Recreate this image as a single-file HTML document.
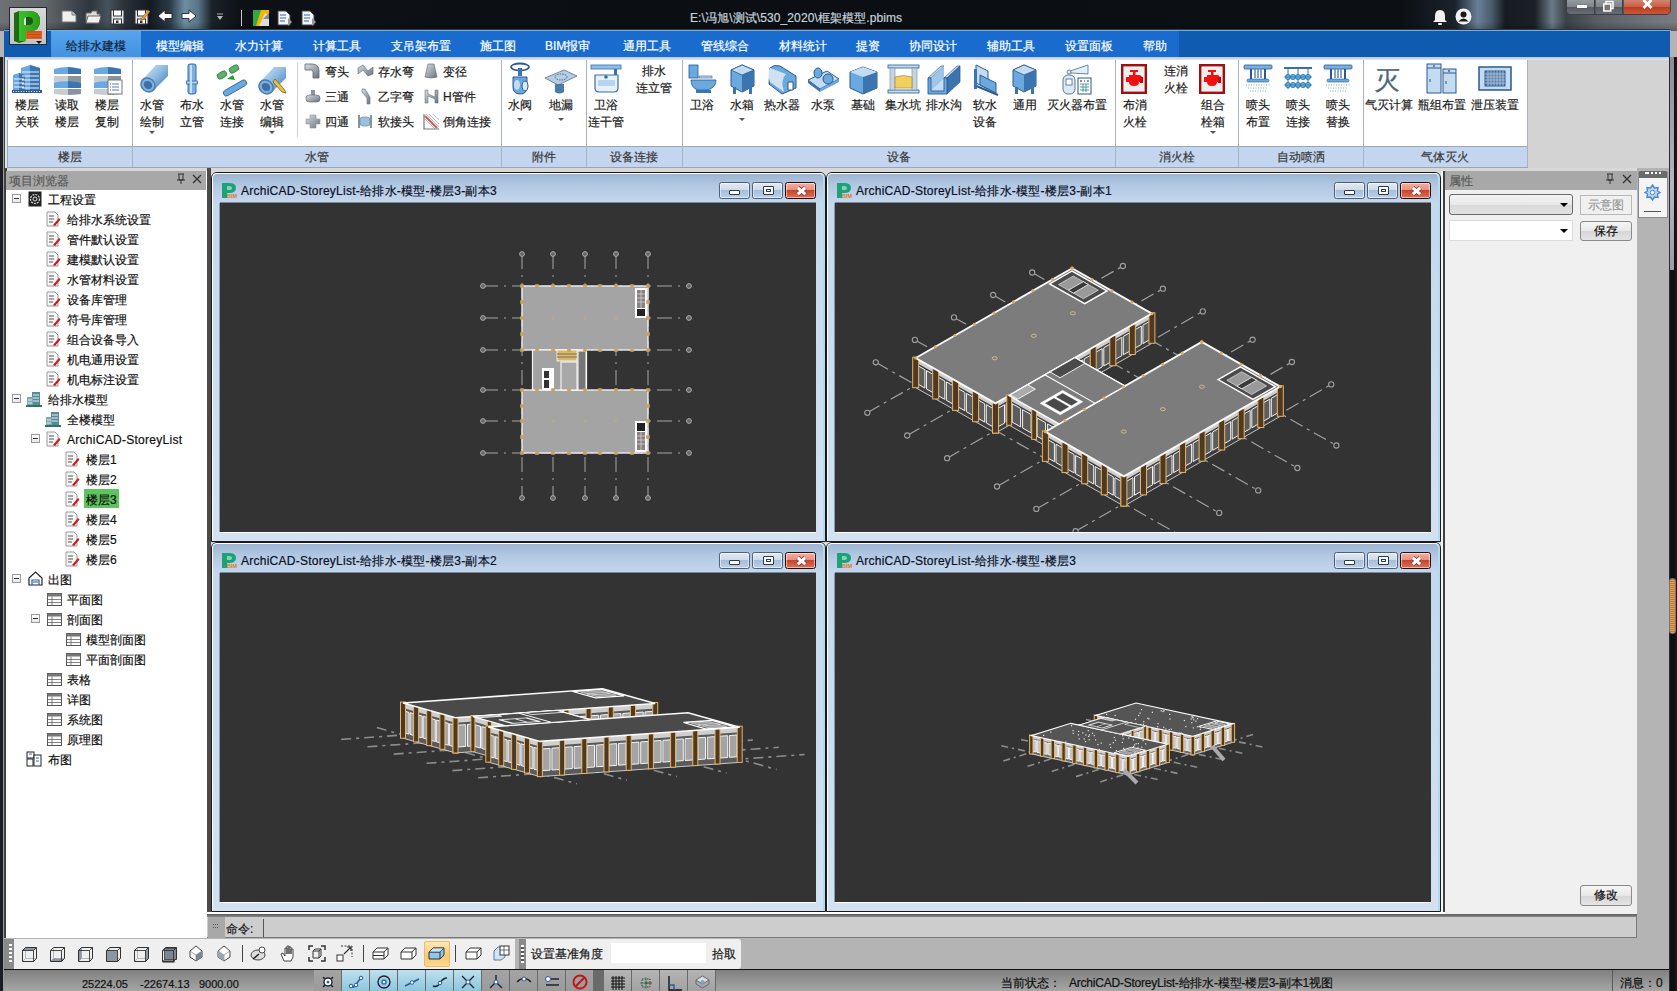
<!DOCTYPE html><html><head><meta charset="utf-8"><style>
*{margin:0;padding:0;box-sizing:border-box}
html,body{width:1677px;height:991px;overflow:hidden;background:#b4b4b4}
body{position:relative;font-family:"Liberation Sans",sans-serif;font-size:12px;color:#1a1a1a;-webkit-text-stroke:0.2px currentColor}
.a{position:absolute}
.t{position:absolute;white-space:nowrap;line-height:14px;margin-top:1px}
.c{position:absolute;white-space:nowrap;line-height:14px;text-align:center;width:80px;margin-top:1px}
svg{position:absolute;overflow:visible}
.tab{position:absolute;top:0;height:26px;line-height:26px;margin-top:1.5px;color:#fff;font-size:12px;white-space:nowrap}
.glab{position:absolute;top:89px;height:21px;background:#c4d6ef;border-top:1px solid #a2aebb;text-align:center;line-height:20px;color:#3a3a3a}
.gsep{position:absolute;top:3px;width:1px;height:107px;background:#b5b5b5}
.ph{position:absolute;left:0;top:0;right:0;height:19px;background:#a8a8a8;color:#5c5c5c;font-size:12px;line-height:19px;padding-left:3px}
.win{position:absolute;width:615px;height:370px;background:linear-gradient(180deg,#9cb4d2 0,#b4cae4 14px,#c4d8ee 30px,#d2e2f2 100%);border:1px solid #1a1a1a;border-radius:6px 6px 0 0;box-shadow:inset -2px 0 0 #b4daf2}
.win:before{content:"";position:absolute;left:0;top:0;right:0;bottom:0;border-top:1px solid #fff;border-left:1px solid #fff;border-radius:5px 5px 0 0}
.vp{position:absolute;left:8px;top:30px;width:596px;height:329px;background:#333;overflow:hidden;box-shadow:0 1px 0 #fff,-1px 0 0 #8d9aa8,0 -1px 0 #7a8796}
.wt{position:absolute;left:29px;top:11px;font-size:12px;line-height:14px;color:#0c1024;white-space:nowrap;letter-spacing:0.25px}
.wb{position:absolute;top:9px;width:31px;height:17px;border:1px solid #50607a;border-radius:2.5px;background:linear-gradient(180deg,#e2eaf4 0,#cfdbea 45%,#a6bedb 50%,#bcd2ea 100%);box-shadow:inset 0 0 0 1px rgba(255,255,255,.5)}
.wb.x{border-color:#2a0c0c;background:linear-gradient(180deg,#f2b0a0 0,#e89080 45%,#c8442a 50%,#dc7258 100%)}
.tr{position:absolute;height:18px;line-height:18px;margin-top:1px;white-space:nowrap;font-size:12px;color:#111}
.ex{position:absolute;width:9px;height:9px;border:1px solid #9a9a9a;background:linear-gradient(180deg,#fff,#e8e8e8)}
.ex:after{content:"";position:absolute;left:1px;top:3px;width:5px;height:1px;background:#333}
.sb{position:absolute;top:0;height:21px;width:28px;border-right:1px solid #6c6c6c}
.lt{letter-spacing:0.28px}
.btn{position:absolute;border:1px solid #8a8a8a;border-radius:3px;background:linear-gradient(180deg,#f6f6f6 0,#e8e8e8 50%,#d6d6d6 51%,#e4e4e4 100%);text-align:center;line-height:18px;color:#111}
</style></head><body><div class="a" style="left:0;top:0;width:1677px;height:31px;background:linear-gradient(90deg,#6e7174 0,#62676b 45px,#3e454c 75px,#2e353c 90px,#46525c 108px,#2a3138 125px,#141a20 150px,#2a3a46 170px,#6e8ea4 185px,#5a7688 198px,#1a2228 212px,#0d1116 240px,#0b0e12 700px,#0c1014 1400px,#1a2229 1455px,#6a8098 1478px,#4a5a68 1492px,#161c22 1505px,#1a2026 1535px,#6a7a86 1552px,#3a4248 1566px,#5a6066 1600px,#6a7076 1640px,#7a7e82 1677px)"></div><div class="a" style="left:0;top:22px;width:1677px;height:9px;background:linear-gradient(180deg,rgba(0,0,0,0),rgba(0,0,0,.25))"></div><svg class="a" style="left:61px;top:10px" width="16" height="13" viewBox="0 0 16 13" ><path d="M1 1 H11 L15 5 V12 H1 Z" fill="#f0f0f0" stroke="#777" stroke-width="1"/><path d="M11 1 V5 H15" fill="#ccc" stroke="#777"/></svg><svg class="a" style="left:85px;top:10px" width="17" height="14" viewBox="0 0 17 14" ><path d="M1 3 H6 L7 1 H12 V4 H15 L13 13 H1 Z" fill="#dcdcdc" stroke="#666"/><path d="M3 6 H16 L14 13 H1 Z" fill="#f2f2f2" stroke="#666"/></svg><svg class="a" style="left:110px;top:9px" width="15" height="16" viewBox="0 0 15 16" ><path d="M1 1 H14 V15 H1 Z" fill="#e4e8ec" stroke="#333"/><rect x="3.5" y="1" width="8" height="6" fill="#fff" stroke="#333"/><rect x="3.5" y="10" width="8" height="5" fill="#fff" stroke="#333"/><rect x="6" y="11.5" width="2.5" height="2.5" fill="#333"/></svg><svg class="a" style="left:134px;top:9px" width="16" height="16" viewBox="0 0 16 16" ><path d="M1 1 H14 V15 H1 Z" fill="#e4e8ec" stroke="#333"/><rect x="3.5" y="1" width="8" height="6" fill="#fff" stroke="#333"/><rect x="3.5" y="10" width="8" height="5" fill="#fff" stroke="#333"/><rect x="6" y="11.5" width="2.5" height="2.5" fill="#333"/><path d="M7 10 L14 1 L16 2.5 L9 11 Z" fill="#f0a030" stroke="#8a5010" stroke-width=".5"/></svg><svg class="a" style="left:157px;top:9px" width="16" height="15" viewBox="0 0 16 15" ><path d="M1 7 L8 1 V4.5 H15 V9.5 H8 V13 Z" fill="#fff" stroke="#222" stroke-width=".9"/></svg><svg class="a" style="left:181px;top:9px" width="16" height="15" viewBox="0 0 16 15" ><path d="M15 7 L8 1 V4.5 H1 V9.5 H8 V13 Z" fill="#fff" stroke="#222" stroke-width=".9"/></svg><svg class="a" style="left:216px;top:13px" width="8" height="8" viewBox="0 0 8 8" ><path d="M1 1 H7" stroke="#aaa"/><path d="M1 3 L4 7 L7 3 Z" fill="#bbb"/></svg><div class="a" style="left:241px;top:10px;width:1px;height:16px;background:#c8c8c8"></div><svg class="a" style="left:253px;top:10px" width="16" height="16" viewBox="0 0 16 16" ><rect x="0" y="0" width="16" height="16" fill="#f4b400"/><path d="M0 0 H8 L3 16 H0 Z" fill="#2ea84a"/><path d="M6 16 L12 3 L16 6 V16 Z" fill="#ddd"/><path d="M10 9 L16 3 V9 Z" fill="#888"/></svg><svg class="a" style="left:277px;top:10px" width="16" height="16" viewBox="0 0 16 16" ><path d="M1 1 H9 L13 5 V15 H1 Z" fill="#f4f4f4" stroke="#444"/><path d="M3 5 H9 M3 8 H9 M3 11 H8" stroke="#2a6ab0" stroke-width="1.2"/><path d="M11 8 L15 12 L11 16 Z" fill="#999"/></svg><svg class="a" style="left:301px;top:10px" width="16" height="16" viewBox="0 0 16 16" ><path d="M1 1 H9 L13 5 V15 H1 Z" fill="#f4f4f4" stroke="#444"/><path d="M3 5 H9 M3 8 H9 M3 11 H8" stroke="#2a6ab0" stroke-width="1.2"/><path d="M11 8 L15 12 L11 16 Z" fill="#999"/></svg><div class="t" style="left:690px;top:9.5px;color:#c6d2de;letter-spacing:0.1px">E:\冯旭\测试\530_2020\框架模型.pbims</div><svg class="a" style="left:1433px;top:9px" width="14" height="16" viewBox="0 0 14 16" ><path d="M7 1 Q12 1 12 7 V11 L14 13 H0 L2 11 V7 Q2 1 7 1 Z" fill="#f2f2f2"/><rect x="5" y="14" width="4" height="2" rx="1" fill="#f2f2f2"/></svg><svg class="a" style="left:1455px;top:8px" width="17" height="17" viewBox="0 0 17 17" ><circle cx="8.5" cy="8.5" r="8" fill="#f2f2f2"/><circle cx="8.5" cy="6.5" r="3" fill="#1a1a1a"/><path d="M3.5 13.5 Q8.5 7.5 13.5 13.5 Z" fill="#1a1a1a"/></svg><div class="a" style="left:1566px;top:-3px;width:105px;height:18px;border:1px solid #39424a;border-radius:0 0 5px 5px;overflow:hidden;background:#555"><div class="a" style="left:0;top:0;width:28px;height:17px;background:linear-gradient(180deg,#9aa0a6 0,#7e858c 50%,#545a60 51%,#6a7076 100%);border-right:1px solid #39424a"></div><div class="a" style="left:29px;top:0;width:27px;height:17px;background:linear-gradient(180deg,#9aa0a6 0,#7e858c 50%,#545a60 51%,#6a7076 100%);border-right:1px solid #39424a"></div><div class="a" style="left:57px;top:0;width:47px;height:17px;background:linear-gradient(180deg,#d89080 0,#c86048 50%,#b83a20 51%,#d05a3a 100%)"></div></div><div class="a" style="left:1577px;top:5px;width:10px;height:3px;background:#fff;box-shadow:0 0 1px #333"></div><svg class="a" style="left:1603px;top:1px" width="11" height="11" viewBox="0 0 11 11" ><rect x="3" y="0.5" width="7" height="7" fill="none" stroke="#fff" stroke-width="1.5"/><rect x="0.8" y="3" width="7" height="7" fill="#777" stroke="#fff" stroke-width="1.5"/></svg><svg class="a" style="left:1641px;top:-1px" width="13" height="11" viewBox="0 0 13 11" ><path d="M2.5 1 L10.5 9 M10.5 1 L2.5 9" stroke="#fff" stroke-width="2.8"/></svg><div class="a" style="left:4px;top:29px;width:1667px;height:2px;background:linear-gradient(180deg,#2a3848 0,#2a3848 1px,#7aa8d8 1px);border-radius:4px 4px 0 0"></div><div class="a" style="left:4px;top:31px;width:1666px;height:26px;background:#0e5bb0"></div><div class="a" style="left:51px;top:31px;width:1128px;height:26px;background:#196cce"></div><div class="a" style="left:51px;top:31px;width:90px;height:26px;background:linear-gradient(180deg,#56a4ec,#4292e0)"></div><div class="tab" style="left:66px;top:31px;color:#14243c">给排水建模</div><div class="tab" style="left:156px;top:31px">模型编辑</div><div class="tab" style="left:235px;top:31px">水力计算</div><div class="tab" style="left:313px;top:31px">计算工具</div><div class="tab" style="left:391px;top:31px">支吊架布置</div><div class="tab" style="left:480px;top:31px">施工图</div><div class="tab" style="left:545px;top:31px">BIM报审</div><div class="tab" style="left:623px;top:31px">通用工具</div><div class="tab" style="left:701px;top:31px">管线综合</div><div class="tab" style="left:779px;top:31px">材料统计</div><div class="tab" style="left:856px;top:31px">提资</div><div class="tab" style="left:909px;top:31px">协同设计</div><div class="tab" style="left:987px;top:31px">辅助工具</div><div class="tab" style="left:1065px;top:31px">设置面板</div><div class="tab" style="left:1143px;top:31px">帮助</div><div class="a" style="left:9px;top:7px;width:38px;height:38px;background:linear-gradient(180deg,#d8d8d8,#c4c4c4);border:1px solid #1e2a36"></div><svg class="a" style="left:10px;top:8px" width="36" height="36" viewBox="0 0 36 36" ><defs><linearGradient id="lg1" x1="0" y1="0" x2="1" y2="0"><stop offset="0" stop-color="#3cc02a"/><stop offset="1" stop-color="#2a9a1c"/></linearGradient></defs><path d="M4 5 L9 3 H20 Q30 3 30 13 Q30 23 20 23 H16 V33 L9 35 L4 33 Z" fill="#1f6a14"/><path d="M9 3 H20 Q30 3 30 13 Q30 23 20 23 H16 V33 H9 Z" fill="url(#lg1)"/><path d="M16 9 H19 Q23 9 23 13 Q23 17 19 17 H16 Z" fill="#1a5a12"/><path d="M16 9 L14 11 V17 H16 Z" fill="#d8ecd0"/><rect x="16" y="23" width="16" height="8" fill="#e0621c"/><path d="M17 24 H31 M17 26.5 H31 M17 29 H31" stroke="#b84810" stroke-width=".8"/><path d="M26 33 L32 33 L29 36 Z" fill="#111"/></svg><div class="a" style="left:4px;top:57px;width:1666px;height:111px;background:#d3d3d3"></div><div class="a" style="left:4px;top:57px;width:1666px;height:3px;background:linear-gradient(180deg,#b6c6d8,#dfe8f2)"></div><div class="a" style="left:4px;top:57px;width:4px;height:111px;background:linear-gradient(90deg,#2a3440 0,#2a3440 1px,#dde4ec 1px)"></div><div class="a" style="left:8px;top:60px;width:1520px;height:87px;background:#fff"></div><div class="a" style="left:7px;top:146px;width:1521px;height:22px;background:#c4d6ef;border:1px solid #9aa6b4"></div><div class="a" style="left:7px;top:60px;width:1px;height:87px;background:#9aa6b4"></div><div class="a" style="left:132px;top:60px;width:1px;height:107px;background:#aab2ba"></div><div class="a" style="left:501px;top:60px;width:1px;height:107px;background:#aab2ba"></div><div class="a" style="left:586px;top:60px;width:1px;height:107px;background:#aab2ba"></div><div class="a" style="left:682px;top:60px;width:1px;height:107px;background:#aab2ba"></div><div class="a" style="left:1115px;top:60px;width:1px;height:107px;background:#aab2ba"></div><div class="a" style="left:1238px;top:60px;width:1px;height:107px;background:#aab2ba"></div><div class="a" style="left:1363px;top:60px;width:1px;height:107px;background:#aab2ba"></div><div class="a" style="left:1527px;top:60px;width:1px;height:107px;background:#aab2ba"></div><div class="a" style="left:1670px;top:57px;width:7px;height:111px;background:#6a6e72"></div><div class="t" style="left:8px;width:124px;top:149px;text-align:center;color:#383838">楼层</div><div class="t" style="left:132px;width:369px;top:149px;text-align:center;color:#383838">水管</div><div class="t" style="left:501px;width:85px;top:149px;text-align:center;color:#383838">附件</div><div class="t" style="left:586px;width:96px;top:149px;text-align:center;color:#383838">设备连接</div><div class="t" style="left:682px;width:433px;top:149px;text-align:center;color:#383838">设备</div><div class="t" style="left:1115px;width:123px;top:149px;text-align:center;color:#383838">消火栓</div><div class="t" style="left:1238px;width:125px;top:149px;text-align:center;color:#383838">自动喷洒</div><div class="t" style="left:1363px;width:164px;top:149px;text-align:center;color:#383838">气体灭火</div><div class="c" style="left:-13px;top:97px">楼层</div><div class="c" style="left:-13px;top:114px">关联</div><div class="c" style="left:27px;top:97px">读取</div><div class="c" style="left:27px;top:114px">楼层</div><div class="c" style="left:67px;top:97px">楼层</div><div class="c" style="left:67px;top:114px">复制</div><div class="c" style="left:112px;top:97px">水管</div><div class="c" style="left:112px;top:114px">绘制</div><div class="c" style="left:152px;top:97px">布水</div><div class="c" style="left:152px;top:114px">立管</div><div class="c" style="left:192px;top:97px">水管</div><div class="c" style="left:192px;top:114px">连接</div><div class="c" style="left:232px;top:97px">水管</div><div class="c" style="left:232px;top:114px">编辑</div><div class="c" style="left:566px;top:97px">卫浴</div><div class="c" style="left:566px;top:114px">连干管</div><div class="c" style="left:945px;top:97px">软水</div><div class="c" style="left:945px;top:114px">设备</div><div class="c" style="left:1095px;top:97px">布消</div><div class="c" style="left:1095px;top:114px">火栓</div><div class="c" style="left:1173px;top:97px">组合</div><div class="c" style="left:1173px;top:114px">栓箱</div><div class="c" style="left:1218px;top:97px">喷头</div><div class="c" style="left:1218px;top:114px">布置</div><div class="c" style="left:1258px;top:97px">喷头</div><div class="c" style="left:1258px;top:114px">连接</div><div class="c" style="left:1298px;top:97px">喷头</div><div class="c" style="left:1298px;top:114px">替换</div><div class="c" style="left:480px;top:97px">水阀</div><div class="c" style="left:521px;top:97px">地漏</div><div class="c" style="left:662px;top:97px">卫浴</div><div class="c" style="left:702px;top:97px">水箱</div><div class="c" style="left:742px;top:97px">热水器</div><div class="c" style="left:783px;top:97px">水泵</div><div class="c" style="left:823px;top:97px">基础</div><div class="c" style="left:863px;top:97px">集水坑</div><div class="c" style="left:904px;top:97px">排水沟</div><div class="c" style="left:985px;top:97px">通用</div><div class="c" style="left:1037px;top:97px">灭火器布置</div><div class="c" style="left:1349px;top:97px">气灭计算</div><div class="c" style="left:1402px;top:97px">瓶组布置</div><div class="c" style="left:1455px;top:97px">泄压装置</div><div class="c" style="left:614px;top:63px">排水</div><div class="c" style="left:614px;top:80px">连立管</div><div class="c" style="left:1136px;top:63px">连消</div><div class="c" style="left:1136px;top:80px">火栓</div><div class="a" style="left:149px;top:131px;width:0;height:0;border-left:3px solid transparent;border-right:3px solid transparent;border-top:3px solid #555"></div><div class="a" style="left:269px;top:131px;width:0;height:0;border-left:3px solid transparent;border-right:3px solid transparent;border-top:3px solid #555"></div><div class="a" style="left:517px;top:118px;width:0;height:0;border-left:3px solid transparent;border-right:3px solid transparent;border-top:3px solid #555"></div><div class="a" style="left:558px;top:118px;width:0;height:0;border-left:3px solid transparent;border-right:3px solid transparent;border-top:3px solid #555"></div><div class="a" style="left:739px;top:118px;width:0;height:0;border-left:3px solid transparent;border-right:3px solid transparent;border-top:3px solid #555"></div><div class="a" style="left:1210px;top:131px;width:0;height:0;border-left:3px solid transparent;border-right:3px solid transparent;border-top:3px solid #555"></div><div class="t" style="left:325px;top:64px">弯头</div><div class="t" style="left:378px;top:64px">存水弯</div><div class="t" style="left:443px;top:64px">变径</div><div class="t" style="left:325px;top:89px">三通</div><div class="t" style="left:378px;top:89px">乙字弯</div><div class="t" style="left:443px;top:89px">H管件</div><div class="t" style="left:325px;top:114px">四通</div><div class="t" style="left:378px;top:114px">软接头</div><div class="t" style="left:443px;top:114px">倒角连接</div><div class="a" style="left:297px;top:63px;width:1px;height:74px;background:#ccc"></div><svg class="a" style="left:12px;top:64px" width="31" height="30" viewBox="0 0 31 30" ><path d="M9 4 L18 1 L28 4 V27 H9 Z" fill="#6aa8e0"/><path d="M18 1 L28 4 V27 H18 Z" fill="#3c74b0"/><path d="M1 11 L7 9 L13 11 V27 H1 Z" fill="#6aa8e0"/><path d="M7 9 L13 11 V27 H7Z" fill="#3c74b0"/><path d="M10 8 H27 M10 12 H27 M10 16 H27 M10 20 H27 M10 24 H27 M2 15 H12 M2 19 H12 M2 23 H12" stroke="#e8f2fb" stroke-width="1.2"/><rect x="0" y="26" width="30" height="3" fill="#2c5a8c"/><path d="M1 27.5 H29" stroke="#fff" stroke-dasharray="1 1.6"/></svg><svg class="a" style="left:53px;top:65px" width="30" height="31" viewBox="0 0 30 31" ><path d="M1 4 Q14 0 28 4 V9 H1 Z" fill="#6aa8e0"/><path d="M15 2 L28 4 V9 H15 Z" fill="#3c74b0"/><path d="M1 11 H28 V17 H1 Z" fill="#c8cdd2"/><path d="M15 11 H28 V17 H15 Z" fill="#8a949e"/><path d="M1 17.5 Q14 15 28 17.5 V23 H1 Z" fill="#6aa8e0"/><path d="M15 16 L28 17.5 V23 H15 Z" fill="#3c74b0"/><path d="M1 24 Q14 22 28 24 V29 Q14 31 1 29 Z" fill="#c8cdd2"/><path d="M15 23 L28 24 V29 L15 30 Z" fill="#8a949e"/><path d="M1 9.5 H28 M1 23.5 H28" stroke="#fff"/></svg><svg class="a" style="left:93px;top:65px" width="30" height="31" viewBox="0 0 30 31" ><path d="M1 4 Q14 0 28 4 V9 H1 Z" fill="#6aa8e0"/><path d="M15 2 L28 4 V9 H15 Z" fill="#3c74b0"/><path d="M1 11 H28 V17 H1 Z" fill="#c8cdd2"/><path d="M15 11 H28 V17 H15 Z" fill="#8a949e"/><path d="M1 17.5 Q14 15 28 17.5 V23 H1 Z" fill="#6aa8e0"/><path d="M15 16 L28 17.5 V23 H15 Z" fill="#3c74b0"/><path d="M1 24 Q14 22 28 24 V29 Q14 31 1 29 Z" fill="#c8cdd2"/><path d="M15 23 L28 24 V29 L15 30 Z" fill="#8a949e"/><path d="M1 9.5 H28 M1 23.5 H28" stroke="#fff"/><rect x="15" y="15" width="14" height="14" fill="#fff" stroke="#777"/><path d="M19 19 H26 M19 22 H26 M19 25 H26" stroke="#5a7cc0" stroke-width="1.2"/><path d="M17.5 19 H18 M17.5 22 H18 M17.5 25 H18" stroke="#2a4a80" stroke-width="1.5"/></svg><svg class="a" style="left:139px;top:63px" width="30" height="30" viewBox="0 0 30 30" ><defs><linearGradient id="pg" x1="0" y1="0" x2="1" y2="1"><stop offset="0" stop-color="#d8e8f6"/><stop offset=".5" stop-color="#8ab8e2"/><stop offset="1" stop-color="#3a6ea8"/></linearGradient></defs><path d="M4 16 L17 2 L29 2 L29 13 L14 28 Z" fill="url(#pg)"/><ellipse cx="9" cy="22" rx="7.5" ry="6.5" transform="rotate(40 9 22)" fill="#7fb0de" stroke="#4a7cb0" stroke-width="1.5"/><ellipse cx="9" cy="22" rx="4.5" ry="3.8" transform="rotate(40 9 22)" fill="#3e6fa6"/></svg><svg class="a" style="left:257px;top:65px" width="30" height="30" viewBox="0 0 30 30" ><path d="M4 16 L17 2 L29 2 L29 13 L14 28 Z" fill="url(#pg)"/><ellipse cx="9" cy="22" rx="7.5" ry="6.5" transform="rotate(40 9 22)" fill="#7fb0de" stroke="#4a7cb0" stroke-width="1.5"/><ellipse cx="9" cy="22" rx="4.5" ry="3.8" transform="rotate(40 9 22)" fill="#3e6fa6"/><path d="M18 14 L27 24 L29 28 L25 27 L16 17 Z" fill="#f2c040" stroke="#7a5a10" stroke-width=".8"/></svg><svg class="a" style="left:186px;top:63px" width="12" height="32" viewBox="0 0 12 32" ><rect x="2" y="1" width="8" height="30" rx="2" fill="#7cb2e2" stroke="#3a6ea8"/><rect x="0.5" y="18" width="11" height="3" fill="#a8ccee" stroke="#3a6ea8" stroke-width=".8"/><rect x="4" y="2" width="2" height="28" fill="#c8e0f6"/></svg><svg class="a" style="left:216px;top:63px" width="33" height="32" viewBox="0 0 33 32" ><rect x="1" y="9" width="10" height="6" rx="3" transform="rotate(-30 6 12)" fill="#5cb06a" stroke="#2a7a3a" stroke-width=".8"/><rect x="13" y="3" width="10" height="6" rx="3" transform="rotate(-30 18 6)" fill="#5cb06a" stroke="#2a7a3a" stroke-width=".8"/><path d="M11 16 L17 12 L19 17 Z" fill="#20a030"/><rect x="6" y="22" width="26" height="6" rx="3" transform="rotate(-30 19 25)" fill="#6aa8e0" stroke="#2c5a8c" stroke-width=".8"/></svg><svg class="a" style="left:509px;top:63px" width="23" height="33" viewBox="0 0 23 33" ><ellipse cx="11" cy="4" rx="9" ry="3.5" fill="none" stroke="#2c5a8c" stroke-width="1.8"/><rect x="9" y="5" width="4" height="8" fill="#3c74b0"/><path d="M4 14 H18 V24 Q18 31 11 31 Q4 31 4 24 Z" fill="#6aa8e0" stroke="#2c5a8c"/><ellipse cx="8" cy="22" rx="3" ry="5" fill="#c4dcf2"/><ellipse cx="16" cy="23" rx="3" ry="5" fill="#d8e8f6" stroke="#2c5a8c"/></svg><svg class="a" style="left:544px;top:68px" width="34" height="28" viewBox="0 0 34 28" ><path d="M1 10 L20 2 L33 8 L14 17 Z" fill="#b8cde0" stroke="#6a8aa8"/><ellipse cx="17" cy="9" rx="6" ry="3" fill="none" stroke="#3a6a98" stroke-dasharray="1.5 1"/><path d="M11 16 H20 V24 H11 Z" fill="#4a7aa8"/><path d="M11 24 Q15.5 27 20 24" fill="#4a7aa8"/></svg><svg class="a" style="left:591px;top:65px" width="31" height="28" viewBox="0 0 31 28" ><rect x="0" y="0" width="30" height="4" fill="#8cc0ea" stroke="#3a6ea8" stroke-width=".8"/><rect x="23" y="4" width="3" height="6" fill="#3a6ea8"/><path d="M4 10 H27 V23 Q27 27 23 27 H8 Q4 27 4 23 Z" fill="#e8f0f8" stroke="#3a6ea8" stroke-width="1.2"/><path d="M7 15 H24 V21 H7 Z" fill="#b8d4ee"/><circle cx="15" cy="12" r="1.8" fill="#3a6ea8"/></svg><svg class="a" style="left:688px;top:64px" width="30" height="30" viewBox="0 0 30 30" ><rect x="1" y="1" width="9" height="13" fill="#6aa8e0" stroke="#2c5a8c" stroke-width=".8"/><rect x="11" y="12" width="13" height="2" fill="#c4dcf2" stroke="#2c5a8c" stroke-width=".6"/><path d="M3 16 H28 Q28 24 19 26 H10 Q3 24 3 16 Z" fill="#6aa8e0" stroke="#2c5a8c" stroke-width=".8"/><rect x="8" y="26" width="15" height="3" fill="#3c74b0"/></svg><svg class="a" style="left:730px;top:64px" width="26" height="31" viewBox="0 0 26 31" ><path d="M1 6 L12 1 L24 6 V22 L12 28 L1 22 Z" fill="#6aa8e0" stroke="#2c5a8c" stroke-width="1"/><path d="M12 11 L24 6 V22 L12 28 Z" fill="#3c74b0"/><path d="M1 6 L12 11 L24 6 L12 1 Z" fill="#c4dcf2" stroke="#2c5a8c" stroke-width=".8"/><rect x="3" y="23" width="3" height="7" fill="#3c74b0"/><rect x="19" y="23" width="3" height="7" fill="#3c74b0"/></svg><svg class="a" style="left:766px;top:64px" width="33" height="31" viewBox="0 0 33 31" ><path d="M4 4 Q8 0 14 2 L30 12 V24 L16 30 L3 20 Z" fill="#6aa8e0" stroke="#2c5a8c"/><path d="M4 4 Q1 10 4 18 L18 28 Q14 16 20 10 Z" fill="#d0e2f2"/><path d="M22 18 H27 V26 H22 Z" fill="#fff" stroke="#2c5a8c"/></svg><svg class="a" style="left:807px;top:67px" width="33" height="28" viewBox="0 0 33 28" ><path d="M1 13 L20 4 L32 12 L13 22 Z" fill="#c4dcf2" stroke="#2c5a8c"/><path d="M1 13 V16 L13 25 V22 Z" fill="#3c74b0"/><path d="M13 22 V25 L32 15 V12 Z" fill="#6aa8e0"/><ellipse cx="11" cy="6" rx="4" ry="5" fill="#6aa8e0" stroke="#2c5a8c"/><ellipse cx="21" cy="12" rx="5" ry="5" fill="#6aa8e0" stroke="#2c5a8c"/></svg><svg class="a" style="left:849px;top:66px" width="29" height="29" viewBox="0 0 29 29" ><path d="M1 6 L14 1 L28 6 V22 L14 28 L1 22 Z" fill="#6aa8e0" stroke="#2c5a8c"/><path d="M14 11 L28 6 V22 L14 28 Z" fill="#3c74b0"/><path d="M1 6 L14 11 L28 6 L14 1 Z" fill="#c4dcf2"/></svg><svg class="a" style="left:887px;top:64px" width="33" height="31" viewBox="0 0 33 31" ><rect x="1" y="1" width="31" height="3" fill="#c4dcf2" stroke="#2c5a8c" stroke-width=".8"/><rect x="1" y="26" width="31" height="3" fill="#c4dcf2" stroke="#2c5a8c" stroke-width=".8"/><rect x="3" y="4" width="5" height="22" fill="#c8d4e0" stroke="#6a8aa8" stroke-width=".6"/><rect x="25" y="4" width="5" height="22" fill="#c8d4e0" stroke="#6a8aa8" stroke-width=".6"/><path d="M8 13 Q16 10 25 13 V24 H8 Z" fill="#f2d060" stroke="#9a7a20" stroke-width=".6"/></svg><svg class="a" style="left:927px;top:64px" width="34" height="31" viewBox="0 0 34 31" ><path d="M1 14 L14 2 L17 2 L4 14 Z" fill="#c4dcf2" stroke="#2c5a8c" stroke-width=".7"/><path d="M4 14 L17 2 V15 L4 27 Z" fill="#9ec6ea"/><path d="M4 27 L17 15 H30 L17 27 Z" fill="#c4dcf2"/><path d="M17 14 L30 2 H33 L20 14 Z" fill="#c4dcf2" stroke="#2c5a8c" stroke-width=".7"/><path d="M20 14 L33 2 V18 L20 30 Z" fill="#3c74b0" stroke="#2c5a8c" stroke-width=".7"/><path d="M1 14 H4 V27 H17 V14 H20 V30 H1 Z" fill="#6aa8e0" stroke="#2c5a8c" stroke-width=".9"/></svg><svg class="a" style="left:972px;top:63px" width="27" height="33" viewBox="0 0 27 33" ><path d="M4 2 L16 8 V26 L4 20 Z" fill="#c4dcf2" stroke="#2c5a8c"/><path d="M8 12 L24 20 V30 L8 22 Z" fill="#6aa8e0" stroke="#2c5a8c"/><path d="M2 22 L26 32" stroke="#2c5a8c" stroke-width="2"/><rect x="2" y="6" width="3" height="20" fill="#3c74b0"/></svg><svg class="a" style="left:1012px;top:64px" width="27" height="31" viewBox="0 0 27 31" ><path d="M1 6 L12 1 L24 6 V22 L12 28 L1 22 Z" fill="#6aa8e0" stroke="#2c5a8c" stroke-width="1"/><path d="M12 11 L24 6 V22 L12 28 Z" fill="#3c74b0"/><path d="M1 6 L12 11 L24 6 L12 1 Z" fill="#c4dcf2" stroke="#2c5a8c" stroke-width=".8"/><rect x="3" y="23" width="3" height="7" fill="#3c74b0"/><rect x="19" y="23" width="3" height="7" fill="#3c74b0"/></svg><svg class="a" style="left:1061px;top:63px" width="33" height="33" viewBox="0 0 33 33" ><path d="M9 8 L27 2 V11 L10 10 Z" fill="#e4eef6" stroke="#5a7a98" stroke-width=".9"/><circle cx="8" cy="9" r="2" fill="#dce8f2" stroke="#5a7a98" stroke-width=".9"/><rect x="2" y="12" width="12" height="19" rx="5" fill="#dce8f2" stroke="#5a7a98" stroke-width="1"/><rect x="5" y="16" width="6" height="6" fill="#fff" stroke="#5a7a98" stroke-width=".9"/><rect x="17" y="15" width="13" height="16" fill="#fff" stroke="#2a5a7a" stroke-width="1"/><circle cx="20" cy="18" r=".9" fill="#d02020"/><circle cx="23.5" cy="18" r=".7" fill="#555"/><circle cx="27" cy="18" r=".9" fill="#20a040"/><path d="M19 21 H28 M19 24 H28 M19 27 H28 M22 21 V29 M25 21 V29" stroke="#2a8a7a" stroke-width=".8"/></svg><svg class="a" style="left:1121px;top:64px" width="27" height="31" viewBox="0 0 27 31" ><rect x="1.2" y="1.2" width="23.6" height="27.6" fill="#f2eeee" stroke="#a01010" stroke-width="2.4"/><rect x="9" y="6" width="8" height="2" fill="#f01010"/><rect x="12" y="8" width="2.5" height="3" fill="#f01010"/><path d="M8 11 H18 Q21 11 21 15 V18 H18 Q18 22 13 22 Q8 22 8 18 H5 V13 H8 Z" fill="#f01010"/><rect x="19" y="13" width="3" height="6" fill="#c80808"/></svg><svg class="a" style="left:1199px;top:64px" width="27" height="31" viewBox="0 0 27 31" ><rect x="1.2" y="1.2" width="23.6" height="27.6" fill="#f2eeee" stroke="#a01010" stroke-width="2.4"/><rect x="9" y="6" width="8" height="2" fill="#f01010"/><rect x="12" y="8" width="2.5" height="3" fill="#f01010"/><path d="M8 11 H18 Q21 11 21 15 V18 H18 Q18 22 13 22 Q8 22 8 18 H5 V13 H8 Z" fill="#f01010"/><rect x="19" y="13" width="3" height="6" fill="#c80808"/></svg><svg class="a" style="left:1243px;top:64px" width="30" height="30" viewBox="0 0 30 30" ><rect x="1" y="1" width="28" height="4" rx="1" fill="#7ab0e0" stroke="#2c5a8c" stroke-width=".8"/><path d="M8 5 V16 H22 V5" fill="none" stroke="#2c5a8c" stroke-width="2"/><path d="M12 5 V14 M15 5 V14 M18 5 V14" stroke="#5a8ab8" stroke-width="1.5"/><rect x="4" y="15" width="22" height="3" rx="1.5" fill="#6aa8e0" stroke="#2c5a8c" stroke-width=".6"/><path d="M3 21 H27 M5 24 H25 M7 27 H23" stroke="#7aa8d4" stroke-dasharray="1 1.5"/></svg><svg class="a" style="left:1323px;top:64px" width="30" height="30" viewBox="0 0 30 30" ><rect x="1" y="1" width="28" height="4" rx="1" fill="#7ab0e0" stroke="#2c5a8c" stroke-width=".8"/><path d="M8 5 V16 H22 V5" fill="none" stroke="#2c5a8c" stroke-width="2"/><path d="M12 5 V14 M15 5 V14 M18 5 V14" stroke="#5a8ab8" stroke-width="1.5"/><rect x="4" y="15" width="22" height="3" rx="1.5" fill="#6aa8e0" stroke="#2c5a8c" stroke-width=".6"/><path d="M3 21 H27 M5 24 H25 M7 27 H23" stroke="#7aa8d4" stroke-dasharray="1 1.5"/></svg><svg class="a" style="left:1283px;top:67px" width="30" height="24" viewBox="0 0 30 24" ><rect x="1" y="0" width="28" height="2" fill="#3a6ea8"/><path d="M5 2 V22 M15 2 V22 M25 2 V22" stroke="#3a6ea8"/><circle cx="5" cy="10" r="2.6" fill="#5ab8e8" stroke="#2a6aa8" stroke-width=".8"/><circle cx="5" cy="18" r="2.6" fill="#5ab8e8" stroke="#2a6aa8" stroke-width=".8"/><circle cx="10" cy="10" r="2.6" fill="#5ab8e8" stroke="#2a6aa8" stroke-width=".8"/><circle cx="10" cy="18" r="2.6" fill="#5ab8e8" stroke="#2a6aa8" stroke-width=".8"/><circle cx="15" cy="10" r="2.6" fill="#5ab8e8" stroke="#2a6aa8" stroke-width=".8"/><circle cx="15" cy="18" r="2.6" fill="#5ab8e8" stroke="#2a6aa8" stroke-width=".8"/><circle cx="20" cy="10" r="2.6" fill="#5ab8e8" stroke="#2a6aa8" stroke-width=".8"/><circle cx="20" cy="18" r="2.6" fill="#5ab8e8" stroke="#2a6aa8" stroke-width=".8"/><circle cx="25" cy="10" r="2.6" fill="#5ab8e8" stroke="#2a6aa8" stroke-width=".8"/><circle cx="25" cy="18" r="2.6" fill="#5ab8e8" stroke="#2a6aa8" stroke-width=".8"/><path d="M1 10 H29 M1 18 H29" stroke="#3a6ea8" stroke-width=".8"/></svg><div class="t" style="left:1374px;top:64px;font-size:26px;line-height:30px;color:#4e667c;-webkit-text-stroke:0.3px #4e667c">灭</div><svg class="a" style="left:1426px;top:63px" width="32" height="31" viewBox="0 0 32 31" ><rect x="1" y="1" width="14" height="29" fill="#c4dcf2" stroke="#2c5a8c"/><rect x="17" y="6" width="13" height="24" fill="#c4dcf2" stroke="#2c5a8c"/><path d="M1 5 H15 M17 10 H30" stroke="#2c5a8c"/><circle cx="8" cy="3" r=".9" fill="#2c5a8c"/><circle cx="23" cy="8" r=".9" fill="#2c5a8c"/><path d="M4 16 V19 M20 18 V21" stroke="#2c5a8c"/></svg><svg class="a" style="left:1478px;top:66px" width="34" height="25" viewBox="0 0 34 25" ><rect x="1" y="1" width="32" height="23" fill="#c4dcf2" stroke="#2c5a8c" stroke-width="1.5"/><rect x="7" y="5" width="20" height="15" fill="#5a7ea8" stroke="#2c5a8c"/><path d="M10 5 V20 M13 5 V20 M16 5 V20 M19 5 V20 M22 5 V20 M25 5 V20 M7 8 H27 M7 11 H27 M7 14 H27 M7 17 H27" stroke="#b8d0e8" stroke-width=".7"/></svg><svg class="a" style="left:304px;top:63px" width="17" height="16" viewBox="0 0 17 16" ><defs><linearGradient id="mg" x1="0" y1="0" x2="1" y2="1"><stop offset="0" stop-color="#d8dde2"/><stop offset="1" stop-color="#6a747e"/></linearGradient></defs><path d="M1 1 H8 Q15 1 15 8 V15 H9 V9 Q9 7 7 7 H1 Z" fill="url(#mg)" stroke="#5a646e" stroke-width=".8"/></svg><svg class="a" style="left:357px;top:64px" width="17" height="13" viewBox="0 0 17 13" ><path d="M1 4 L6 1 L11 7 L16 3 V10 L11 12 L6 6 L1 10 Z" fill="url(#mg)" stroke="#5a646e" stroke-width=".6"/></svg><svg class="a" style="left:424px;top:63px" width="14" height="16" viewBox="0 0 14 16" ><path d="M4 1 H10 L13 14 Q7 16 1 14 Z" fill="url(#mg)" stroke="#5a646e" stroke-width=".6"/></svg><svg class="a" style="left:305px;top:89px" width="16" height="14" viewBox="0 0 16 14" ><rect x="6" y="1" width="4" height="6" fill="#8a949e"/><rect x="1" y="6" width="14" height="7" rx="3" fill="url(#mg)" stroke="#5a646e" stroke-width=".6"/></svg><svg class="a" style="left:360px;top:88px" width="12" height="17" viewBox="0 0 12 17" ><path d="M2 1 L5 1 L10 9 V16 H7 V10 L2 4 Z" fill="url(#mg)" stroke="#6a747e" stroke-width=".6"/></svg><svg class="a" style="left:424px;top:89px" width="15" height="15" viewBox="0 0 15 15" ><path d="M1 1 H4 V5 L11 8 V1 H14 V14 H11 V10 L4 7 V14 H1 Z" fill="url(#mg)" stroke="#5a646e" stroke-width=".5"/></svg><svg class="a" style="left:305px;top:114px" width="16" height="15" viewBox="0 0 16 15" ><path d="M5 1 H11 V5 H15 V10 H11 V14 H5 V10 H1 V5 H5 Z" fill="url(#mg)" stroke="#8a949e" stroke-width=".6"/></svg><svg class="a" style="left:357px;top:114px" width="16" height="15" viewBox="0 0 16 15" ><rect x="1" y="1" width="2" height="13" fill="#8a949e"/><rect x="13" y="1" width="2" height="13" fill="#8a949e"/><rect x="3" y="3" width="10" height="9" rx="3" fill="#9ec0e0" stroke="#5a7a98" stroke-width=".6"/></svg><svg class="a" style="left:423px;top:113px" width="17" height="17" viewBox="0 0 17 17" ><path d="M1 1 V16 H16" fill="none" stroke="#777" stroke-width="1.2"/><path d="M3 1 L16 14 M6 1 L16 11 M10 1 L16 7 M1 5 L12 16" stroke="#999" stroke-width=".7"/><path d="M2 3 L14 15" stroke="#c85a5a" stroke-width="2"/></svg><div class="a" style="left:4px;top:168px;width:1665px;height:3px;background:#d8d8d8"></div><div class="a" style="left:211px;top:168px;width:1230px;height:744px;background:#d8d8d8"></div><div class="win" style="left:211px;top:172px"><svg class="a" style="left:9px;top:9px" width="17" height="17" viewBox="0 0 17 17" ><path d="M1 1 H8 Q15 1 15 6 Q15 11 8 11 H6 V16 H1 Z" fill="#1ea078"/><path d="M6 4 H8 Q11 4 11 6 Q11 8 8 8 H6 Z" fill="#7ad8b0"/><text x="6" y="16" font-size="5.5" font-weight="bold" fill="#e07820" font-family="Liberation Sans">BIM</text></svg><div class="wt">ArchiCAD-StoreyList-给排水-模型-楼层3-副本3</div><div class="wb" style="left:507px"><div class="a" style="left:9px;top:7px;width:11px;height:5px;border:1px solid #2a3a50;border-radius:1px;background:#fff"></div></div><div class="wb" style="left:540px"><div class="a" style="left:10px;top:3px;width:11px;height:9px;border:1px solid #2a3a50;border-radius:1px;background:#fff"><div class="a" style="left:2px;top:2px;width:5px;height:3px;border:1px solid #2a3a50"></div></div></div><div class="wb x" style="left:573px"><svg class="a" style="left:9px;top:3px" width="13" height="10" viewBox="0 0 13 10" ><path d="M2.8 1.8 L10.2 8.2 M10.2 1.8 L2.8 8.2" stroke="#7a4a40" stroke-width="4.6"/><path d="M2.8 1.8 L10.2 8.2 M10.2 1.8 L2.8 8.2" stroke="#fff" stroke-width="3"/></svg></div><div class="vp"><svg class="a" style="left:0;top:0" width="596" height="328"><line x1="302" y1="51" x2="302" y2="295" stroke="#a8a8a8" stroke-width="1" stroke-dasharray="15 6 2 6"/><circle cx="302" cy="51" r="2.4" fill="#666" stroke="#aaa"/><circle cx="302" cy="295" r="2.4" fill="#666" stroke="#aaa"/><line x1="333" y1="51" x2="333" y2="295" stroke="#a8a8a8" stroke-width="1" stroke-dasharray="15 6 2 6"/><circle cx="333" cy="51" r="2.4" fill="#666" stroke="#aaa"/><circle cx="333" cy="295" r="2.4" fill="#666" stroke="#aaa"/><line x1="365" y1="51" x2="365" y2="295" stroke="#a8a8a8" stroke-width="1" stroke-dasharray="15 6 2 6"/><circle cx="365" cy="51" r="2.4" fill="#666" stroke="#aaa"/><circle cx="365" cy="295" r="2.4" fill="#666" stroke="#aaa"/><line x1="396" y1="51" x2="396" y2="295" stroke="#a8a8a8" stroke-width="1" stroke-dasharray="15 6 2 6"/><circle cx="396" cy="51" r="2.4" fill="#666" stroke="#aaa"/><circle cx="396" cy="295" r="2.4" fill="#666" stroke="#aaa"/><line x1="428" y1="51" x2="428" y2="295" stroke="#a8a8a8" stroke-width="1" stroke-dasharray="15 6 2 6"/><circle cx="428" cy="51" r="2.4" fill="#666" stroke="#aaa"/><circle cx="428" cy="295" r="2.4" fill="#666" stroke="#aaa"/><line x1="263" y1="83" x2="469" y2="83" stroke="#a8a8a8" stroke-width="1" stroke-dasharray="15 6 2 6"/><circle cx="263" cy="83" r="2.4" fill="#666" stroke="#aaa"/><circle cx="469" cy="83" r="2.4" fill="#666" stroke="#aaa"/><line x1="263" y1="115" x2="469" y2="115" stroke="#a8a8a8" stroke-width="1" stroke-dasharray="15 6 2 6"/><circle cx="263" cy="115" r="2.4" fill="#666" stroke="#aaa"/><circle cx="469" cy="115" r="2.4" fill="#666" stroke="#aaa"/><line x1="263" y1="147" x2="469" y2="147" stroke="#a8a8a8" stroke-width="1" stroke-dasharray="15 6 2 6"/><circle cx="263" cy="147" r="2.4" fill="#666" stroke="#aaa"/><circle cx="469" cy="147" r="2.4" fill="#666" stroke="#aaa"/><line x1="263" y1="187" x2="469" y2="187" stroke="#a8a8a8" stroke-width="1" stroke-dasharray="15 6 2 6"/><circle cx="263" cy="187" r="2.4" fill="#666" stroke="#aaa"/><circle cx="469" cy="187" r="2.4" fill="#666" stroke="#aaa"/><line x1="263" y1="218" x2="469" y2="218" stroke="#a8a8a8" stroke-width="1" stroke-dasharray="15 6 2 6"/><circle cx="263" cy="218" r="2.4" fill="#666" stroke="#aaa"/><circle cx="469" cy="218" r="2.4" fill="#666" stroke="#aaa"/><line x1="263" y1="250" x2="469" y2="250" stroke="#a8a8a8" stroke-width="1" stroke-dasharray="15 6 2 6"/><circle cx="263" cy="250" r="2.4" fill="#666" stroke="#aaa"/><circle cx="469" cy="250" r="2.4" fill="#666" stroke="#aaa"/><rect x="302" y="83" width="126" height="64" fill="#a4a4a4" stroke="#f4f4f4" stroke-width="1.3"/><rect x="302" y="187" width="126" height="63" fill="#a4a4a4" stroke="#f4f4f4" stroke-width="1.3"/><rect x="312.5" y="147" width="54" height="40" fill="#a2a2a2" stroke="#f4f4f4" stroke-width="1.2"/><rect x="341" y="159" width="16" height="28" fill="#a8a8a8" stroke="#fff" stroke-width="1"/><rect x="358" y="148" width="8" height="39" fill="#777" stroke="#fff" stroke-width="1"/><rect x="337" y="147" width="20" height="11" fill="#d8b870" stroke="#fff" stroke-width=".8"/><path d="M337 151 H357 M337 154 H357" stroke="#6a5a30" stroke-width=".8"/><rect x="322" y="165" width="12" height="22" fill="#fff"/><rect x="324" y="168" width="5" height="7" fill="#333"/><rect x="324" y="177" width="5" height="8" fill="#333"/><rect x="415" y="85" width="12" height="30" fill="#fff"/><rect x="417" y="87" width="8" height="18" fill="#8a8080"/><path d="M417 91 H425 M417 95 H425 M417 99 H425 M421 87 V105" stroke="#ddd" stroke-width=".7"/><rect x="417" y="106" width="8" height="7" fill="#222"/><rect x="415" y="218" width="12" height="31" fill="#fff"/><rect x="417" y="220" width="8" height="8" fill="#222"/><rect x="417" y="229" width="8" height="18" fill="#8a8080"/><path d="M417 233 H425 M417 237 H425 M417 241 H425 M421 229 V247" stroke="#ddd" stroke-width=".7"/><rect x="300.2" y="81.2" width="3.6" height="3.6" fill="#c8a060"/><rect x="300.2" y="145.2" width="3.6" height="3.6" fill="#c8a060"/><rect x="300.2" y="185.2" width="3.6" height="3.6" fill="#c8a060"/><rect x="300.2" y="248.2" width="3.6" height="3.6" fill="#c8a060"/><rect x="331.2" y="81.2" width="3.6" height="3.6" fill="#c8a060"/><rect x="331.2" y="145.2" width="3.6" height="3.6" fill="#c8a060"/><rect x="331.2" y="185.2" width="3.6" height="3.6" fill="#c8a060"/><rect x="331.2" y="248.2" width="3.6" height="3.6" fill="#c8a060"/><rect x="363.2" y="81.2" width="3.6" height="3.6" fill="#c8a060"/><rect x="363.2" y="145.2" width="3.6" height="3.6" fill="#c8a060"/><rect x="363.2" y="185.2" width="3.6" height="3.6" fill="#c8a060"/><rect x="363.2" y="248.2" width="3.6" height="3.6" fill="#c8a060"/><rect x="394.2" y="81.2" width="3.6" height="3.6" fill="#c8a060"/><rect x="394.2" y="145.2" width="3.6" height="3.6" fill="#c8a060"/><rect x="394.2" y="185.2" width="3.6" height="3.6" fill="#c8a060"/><rect x="394.2" y="248.2" width="3.6" height="3.6" fill="#c8a060"/><rect x="426.2" y="81.2" width="3.6" height="3.6" fill="#c8a060"/><rect x="426.2" y="145.2" width="3.6" height="3.6" fill="#c8a060"/><rect x="426.2" y="185.2" width="3.6" height="3.6" fill="#c8a060"/><rect x="426.2" y="248.2" width="3.6" height="3.6" fill="#c8a060"/><rect x="315.2" y="81.2" width="3.6" height="3.6" fill="#c8a060"/><rect x="315.2" y="145.2" width="3.6" height="3.6" fill="#c8a060"/><rect x="315.2" y="185.2" width="3.6" height="3.6" fill="#c8a060"/><rect x="315.2" y="248.2" width="3.6" height="3.6" fill="#c8a060"/><rect x="347.2" y="81.2" width="3.6" height="3.6" fill="#c8a060"/><rect x="347.2" y="145.2" width="3.6" height="3.6" fill="#c8a060"/><rect x="347.2" y="185.2" width="3.6" height="3.6" fill="#c8a060"/><rect x="347.2" y="248.2" width="3.6" height="3.6" fill="#c8a060"/><rect x="378.2" y="81.2" width="3.6" height="3.6" fill="#c8a060"/><rect x="378.2" y="145.2" width="3.6" height="3.6" fill="#c8a060"/><rect x="378.2" y="185.2" width="3.6" height="3.6" fill="#c8a060"/><rect x="378.2" y="248.2" width="3.6" height="3.6" fill="#c8a060"/><rect x="410.2" y="81.2" width="3.6" height="3.6" fill="#c8a060"/><rect x="410.2" y="145.2" width="3.6" height="3.6" fill="#c8a060"/><rect x="410.2" y="185.2" width="3.6" height="3.6" fill="#c8a060"/><rect x="410.2" y="248.2" width="3.6" height="3.6" fill="#c8a060"/><rect x="300.2" y="97.2" width="3.6" height="3.6" fill="#c8a060"/><rect x="426.2" y="97.2" width="3.6" height="3.6" fill="#c8a060"/><rect x="300.2" y="113.2" width="3.6" height="3.6" fill="#c8a060"/><rect x="426.2" y="113.2" width="3.6" height="3.6" fill="#c8a060"/><rect x="300.2" y="129.2" width="3.6" height="3.6" fill="#c8a060"/><rect x="426.2" y="129.2" width="3.6" height="3.6" fill="#c8a060"/><rect x="300.2" y="201.2" width="3.6" height="3.6" fill="#c8a060"/><rect x="426.2" y="201.2" width="3.6" height="3.6" fill="#c8a060"/><rect x="300.2" y="216.2" width="3.6" height="3.6" fill="#c8a060"/><rect x="426.2" y="216.2" width="3.6" height="3.6" fill="#c8a060"/><rect x="300.2" y="232.2" width="3.6" height="3.6" fill="#c8a060"/><rect x="426.2" y="232.2" width="3.6" height="3.6" fill="#c8a060"/><circle cx="333" cy="115" r="1.6" fill="#b8a888"/><circle cx="333" cy="218" r="1.6" fill="#b8a888"/><circle cx="365" cy="115" r="1.6" fill="#b8a888"/><circle cx="365" cy="218" r="1.6" fill="#b8a888"/><circle cx="396" cy="115" r="1.6" fill="#b8a888"/><circle cx="396" cy="218" r="1.6" fill="#b8a888"/></svg></div></div><div class="win" style="left:826px;top:172px"><svg class="a" style="left:9px;top:9px" width="17" height="17" viewBox="0 0 17 17" ><path d="M1 1 H8 Q15 1 15 6 Q15 11 8 11 H6 V16 H1 Z" fill="#1ea078"/><path d="M6 4 H8 Q11 4 11 6 Q11 8 8 8 H6 Z" fill="#7ad8b0"/><text x="6" y="16" font-size="5.5" font-weight="bold" fill="#e07820" font-family="Liberation Sans">BIM</text></svg><div class="wt">ArchiCAD-StoreyList-给排水-模型-楼层3-副本1</div><div class="wb" style="left:507px"><div class="a" style="left:9px;top:7px;width:11px;height:5px;border:1px solid #2a3a50;border-radius:1px;background:#fff"></div></div><div class="wb" style="left:540px"><div class="a" style="left:10px;top:3px;width:11px;height:9px;border:1px solid #2a3a50;border-radius:1px;background:#fff"><div class="a" style="left:2px;top:2px;width:5px;height:3px;border:1px solid #2a3a50"></div></div></div><div class="wb x" style="left:573px"><svg class="a" style="left:9px;top:3px" width="13" height="10" viewBox="0 0 13 10" ><path d="M2.8 1.8 L10.2 8.2 M10.2 1.8 L2.8 8.2" stroke="#7a4a40" stroke-width="4.6"/><path d="M2.8 1.8 L10.2 8.2 M10.2 1.8 L2.8 8.2" stroke="#fff" stroke-width="3"/></svg></div><div class="vp"><svg class="a" style="left:0;top:0" width="596" height="328"><line x1="40.8" y1="159.3" x2="345.1" y2="332.3" stroke="#a0a0a0" stroke-width="1.2" stroke-dasharray="14 5 3 5"/><circle cx="40.8" cy="159.3" r="2.6" fill="#333" stroke="#a0a0a0" stroke-width="1.1"/><circle cx="345.1" cy="332.3" r="2.6" fill="#333" stroke="#a0a0a0" stroke-width="1.1"/><line x1="79.9" y1="136.9" x2="384.2" y2="309.9" stroke="#a0a0a0" stroke-width="1.2" stroke-dasharray="14 5 3 5"/><circle cx="79.9" cy="136.9" r="2.6" fill="#333" stroke="#a0a0a0" stroke-width="1.1"/><circle cx="384.2" cy="309.9" r="2.6" fill="#333" stroke="#a0a0a0" stroke-width="1.1"/><line x1="119.0" y1="114.4" x2="423.2" y2="287.4" stroke="#a0a0a0" stroke-width="1.2" stroke-dasharray="14 5 3 5"/><circle cx="119.0" cy="114.4" r="2.6" fill="#333" stroke="#a0a0a0" stroke-width="1.1"/><circle cx="423.2" cy="287.4" r="2.6" fill="#333" stroke="#a0a0a0" stroke-width="1.1"/><line x1="158.1" y1="92.0" x2="462.3" y2="265.0" stroke="#a0a0a0" stroke-width="1.2" stroke-dasharray="14 5 3 5"/><circle cx="158.1" cy="92.0" r="2.6" fill="#333" stroke="#a0a0a0" stroke-width="1.1"/><circle cx="462.3" cy="265.0" r="2.6" fill="#333" stroke="#a0a0a0" stroke-width="1.1"/><line x1="197.2" y1="69.5" x2="501.4" y2="242.5" stroke="#a0a0a0" stroke-width="1.2" stroke-dasharray="14 5 3 5"/><circle cx="197.2" cy="69.5" r="2.6" fill="#333" stroke="#a0a0a0" stroke-width="1.1"/><circle cx="501.4" cy="242.5" r="2.6" fill="#333" stroke="#a0a0a0" stroke-width="1.1"/><line x1="32.3" y1="209.8" x2="287.9" y2="63.0" stroke="#a0a0a0" stroke-width="1.2" stroke-dasharray="14 5 3 5"/><circle cx="32.3" cy="209.8" r="2.6" fill="#333" stroke="#a0a0a0" stroke-width="1.1"/><circle cx="287.9" cy="63.0" r="2.6" fill="#333" stroke="#a0a0a0" stroke-width="1.1"/><line x1="72.2" y1="232.5" x2="327.9" y2="85.7" stroke="#a0a0a0" stroke-width="1.2" stroke-dasharray="14 5 3 5"/><circle cx="72.2" cy="232.5" r="2.6" fill="#333" stroke="#a0a0a0" stroke-width="1.1"/><circle cx="327.9" cy="85.7" r="2.6" fill="#333" stroke="#a0a0a0" stroke-width="1.1"/><line x1="112.1" y1="255.2" x2="367.8" y2="108.4" stroke="#a0a0a0" stroke-width="1.2" stroke-dasharray="14 5 3 5"/><circle cx="112.1" cy="255.2" r="2.6" fill="#333" stroke="#a0a0a0" stroke-width="1.1"/><circle cx="367.8" cy="108.4" r="2.6" fill="#333" stroke="#a0a0a0" stroke-width="1.1"/><line x1="162.0" y1="283.5" x2="417.6" y2="136.7" stroke="#a0a0a0" stroke-width="1.2" stroke-dasharray="14 5 3 5"/><circle cx="162.0" cy="283.5" r="2.6" fill="#333" stroke="#a0a0a0" stroke-width="1.1"/><circle cx="417.6" cy="136.7" r="2.6" fill="#333" stroke="#a0a0a0" stroke-width="1.1"/><line x1="201.3" y1="305.9" x2="456.9" y2="159.0" stroke="#a0a0a0" stroke-width="1.2" stroke-dasharray="14 5 3 5"/><circle cx="201.3" cy="305.9" r="2.6" fill="#333" stroke="#a0a0a0" stroke-width="1.1"/><circle cx="456.9" cy="159.0" r="2.6" fill="#333" stroke="#a0a0a0" stroke-width="1.1"/><line x1="240.6" y1="328.2" x2="496.2" y2="181.4" stroke="#a0a0a0" stroke-width="1.2" stroke-dasharray="14 5 3 5"/><circle cx="240.6" cy="328.2" r="2.6" fill="#333" stroke="#a0a0a0" stroke-width="1.1"/><circle cx="496.2" cy="181.4" r="2.6" fill="#333" stroke="#a0a0a0" stroke-width="1.1"/><polygon points="80.7,155.0 160.5,200.4 160.5,230.1 80.7,184.7" fill="#3e3e3e" stroke="#e8e8e8" stroke-width=".8"/><polygon points="80.7,155.0 160.5,200.4 160.5,204.7 80.7,159.3" fill="#cfcfcf"/><polygon points="83.1,162.8 89.9,166.7 89.9,185.1 83.1,181.2" fill="#5c5c5c" stroke="#f4f4f4" stroke-width="1"/><polygon points="91.5,167.6 98.3,171.5 98.3,189.8 91.5,186.0" fill="#5c5c5c" stroke="#f4f4f4" stroke-width="1"/><polygon points="103.0,174.2 109.8,178.0 109.8,196.4 103.0,192.5" fill="#5c5c5c" stroke="#f4f4f4" stroke-width="1"/><polygon points="111.4,178.9 118.2,182.8 118.2,201.2 111.4,197.3" fill="#5c5c5c" stroke="#f4f4f4" stroke-width="1"/><polygon points="123.0,185.5 129.8,189.4 129.8,207.7 123.0,203.9" fill="#5c5c5c" stroke="#f4f4f4" stroke-width="1"/><polygon points="131.4,190.3 138.2,194.2 138.2,212.5 131.4,208.7" fill="#5c5c5c" stroke="#f4f4f4" stroke-width="1"/><polygon points="143.0,196.9 149.7,200.7 149.7,219.1 143.0,215.2" fill="#5c5c5c" stroke="#f4f4f4" stroke-width="1"/><polygon points="151.3,201.6 158.1,205.5 158.1,223.9 151.3,220.0" fill="#5c5c5c" stroke="#f4f4f4" stroke-width="1"/><rect x="77.7" y="154.2" width="6" height="30.5" fill="#4e3a22" stroke="#e8b468" stroke-width="1"/><rect x="97.7" y="165.5" width="6" height="30.5" fill="#4e3a22" stroke="#e8b468" stroke-width="1"/><rect x="117.6" y="176.9" width="6" height="30.5" fill="#4e3a22" stroke="#e8b468" stroke-width="1"/><rect x="137.6" y="188.2" width="6" height="30.5" fill="#4e3a22" stroke="#e8b468" stroke-width="1"/><rect x="157.5" y="199.6" width="6" height="30.5" fill="#4e3a22" stroke="#e8b468" stroke-width="1"/><polygon points="160.5,200.4 316.9,110.6 316.9,140.3 160.5,230.1" fill="#3e3e3e" stroke="#e8e8e8" stroke-width=".8"/><polygon points="160.5,200.4 316.9,110.6 316.9,114.9 160.5,204.7" fill="#cfcfcf"/><polygon points="162.9,205.5 169.5,201.7 169.5,220.1 162.9,223.9" fill="#5c5c5c" stroke="#f4f4f4" stroke-width="1"/><polygon points="171.1,200.8 177.7,197.0 177.7,215.3 171.1,219.2" fill="#5c5c5c" stroke="#f4f4f4" stroke-width="1"/><polygon points="182.4,194.3 189.0,190.5 189.0,208.8 182.4,212.6" fill="#5c5c5c" stroke="#f4f4f4" stroke-width="1"/><polygon points="190.6,189.6 197.3,185.8 197.3,204.1 190.6,207.9" fill="#5c5c5c" stroke="#f4f4f4" stroke-width="1"/><polygon points="201.9,183.1 208.6,179.2 208.6,197.6 201.9,201.4" fill="#5c5c5c" stroke="#f4f4f4" stroke-width="1"/><polygon points="210.2,178.3 216.8,174.5 216.8,192.9 210.2,196.7" fill="#5c5c5c" stroke="#f4f4f4" stroke-width="1"/><polygon points="221.5,171.8 228.1,168.0 228.1,186.4 221.5,190.2" fill="#5c5c5c" stroke="#f4f4f4" stroke-width="1"/><polygon points="229.7,167.1 236.3,163.3 236.3,181.7 229.7,185.5" fill="#5c5c5c" stroke="#f4f4f4" stroke-width="1"/><polygon points="241.0,160.6 247.7,156.8 247.7,175.2 241.0,179.0" fill="#5c5c5c" stroke="#f4f4f4" stroke-width="1"/><polygon points="249.2,155.9 255.9,152.1 255.9,170.4 249.2,174.3" fill="#5c5c5c" stroke="#f4f4f4" stroke-width="1"/><polygon points="260.6,149.4 267.2,145.6 267.2,163.9 260.6,167.7" fill="#5c5c5c" stroke="#f4f4f4" stroke-width="1"/><polygon points="268.8,144.7 275.4,140.9 275.4,159.2 268.8,163.0" fill="#5c5c5c" stroke="#f4f4f4" stroke-width="1"/><polygon points="280.1,138.2 286.8,134.3 286.8,152.7 280.1,156.5" fill="#5c5c5c" stroke="#f4f4f4" stroke-width="1"/><polygon points="288.3,133.4 295.0,129.6 295.0,148.0 288.3,151.8" fill="#5c5c5c" stroke="#f4f4f4" stroke-width="1"/><polygon points="299.7,126.9 306.3,123.1 306.3,141.5 299.7,145.3" fill="#5c5c5c" stroke="#f4f4f4" stroke-width="1"/><polygon points="307.9,122.2 314.5,118.4 314.5,136.8 307.9,140.6" fill="#5c5c5c" stroke="#f4f4f4" stroke-width="1"/><rect x="157.5" y="199.6" width="6" height="30.5" fill="#4e3a22" stroke="#e8b468" stroke-width="1"/><rect x="177.1" y="188.3" width="6" height="30.5" fill="#4e3a22" stroke="#e8b468" stroke-width="1"/><rect x="196.6" y="177.1" width="6" height="30.5" fill="#4e3a22" stroke="#e8b468" stroke-width="1"/><rect x="216.1" y="165.9" width="6" height="30.5" fill="#4e3a22" stroke="#e8b468" stroke-width="1"/><rect x="235.7" y="154.7" width="6" height="30.5" fill="#4e3a22" stroke="#e8b468" stroke-width="1"/><rect x="255.2" y="143.4" width="6" height="30.5" fill="#4e3a22" stroke="#e8b468" stroke-width="1"/><rect x="274.8" y="132.2" width="6" height="30.5" fill="#4e3a22" stroke="#e8b468" stroke-width="1"/><rect x="294.3" y="121.0" width="6" height="30.5" fill="#4e3a22" stroke="#e8b468" stroke-width="1"/><rect x="313.9" y="109.8" width="6" height="30.5" fill="#4e3a22" stroke="#e8b468" stroke-width="1"/><polygon points="80.7,155.0 237.1,65.2 316.9,110.6 160.5,200.4" fill="#7c7c7c" stroke="#fafafa" stroke-width="1.8"/><polygon points="174.2,192.5 224.0,220.9 224.0,250.6 174.2,222.2" fill="#3e3e3e" stroke="#e8e8e8" stroke-width=".8"/><polygon points="174.2,192.5 224.0,220.9 224.0,225.2 174.2,196.9" fill="#cfcfcf"/><polygon points="177.2,200.7 185.6,205.5 185.6,223.9 177.2,219.1" fill="#5c5c5c" stroke="#f4f4f4" stroke-width="1"/><polygon points="187.6,206.7 196.1,211.5 196.1,229.9 187.6,225.0" fill="#5c5c5c" stroke="#f4f4f4" stroke-width="1"/><polygon points="202.1,214.9 210.6,219.7 210.6,238.1 202.1,233.3" fill="#5c5c5c" stroke="#f4f4f4" stroke-width="1"/><polygon points="212.6,220.9 221.0,225.7 221.0,244.0 212.6,239.2" fill="#5c5c5c" stroke="#f4f4f4" stroke-width="1"/><rect x="171.8" y="191.7" width="4.800000000000001" height="30.5" fill="#4e3a22" stroke="#e8b468" stroke-width="1"/><rect x="196.7" y="205.9" width="4.800000000000001" height="30.5" fill="#4e3a22" stroke="#e8b468" stroke-width="1"/><rect x="221.6" y="220.1" width="4.800000000000001" height="30.5" fill="#4e3a22" stroke="#e8b468" stroke-width="1"/><polygon points="224.0,220.9 289.8,183.1 289.8,212.8 224.0,250.6" fill="#3e3e3e" stroke="#e8e8e8" stroke-width=".8"/><polygon points="224.0,220.9 289.8,183.1 289.8,187.4 224.0,225.2" fill="#cfcfcf"/><polygon points="226.7,225.9 234.1,221.6 234.1,239.9 226.7,244.2" fill="#5c5c5c" stroke="#f4f4f4" stroke-width="1"/><polygon points="235.9,220.6 243.3,216.3 243.3,234.7 235.9,238.9" fill="#5c5c5c" stroke="#f4f4f4" stroke-width="1"/><polygon points="248.6,213.3 256.0,209.0 256.0,227.4 248.6,231.6" fill="#5c5c5c" stroke="#f4f4f4" stroke-width="1"/><polygon points="257.8,208.0 265.3,203.7 265.3,222.1 257.8,226.3" fill="#5c5c5c" stroke="#f4f4f4" stroke-width="1"/><polygon points="270.5,200.7 278.0,196.4 278.0,214.8 270.5,219.0" fill="#5c5c5c" stroke="#f4f4f4" stroke-width="1"/><polygon points="279.7,195.4 287.2,191.1 287.2,209.5 279.7,213.8" fill="#5c5c5c" stroke="#f4f4f4" stroke-width="1"/><rect x="221.6" y="220.1" width="4.800000000000001" height="30.5" fill="#4e3a22" stroke="#e8b468" stroke-width="1"/><rect x="243.6" y="207.5" width="4.800000000000001" height="30.5" fill="#4e3a22" stroke="#e8b468" stroke-width="1"/><rect x="265.5" y="194.9" width="4.800000000000001" height="30.5" fill="#4e3a22" stroke="#e8b468" stroke-width="1"/><rect x="287.4" y="182.3" width="4.800000000000001" height="30.5" fill="#4e3a22" stroke="#e8b468" stroke-width="1"/><polygon points="174.2,192.5 239.9,154.8 289.8,183.1 224.0,220.9" fill="#7c7c7c" stroke="#fafafa" stroke-width="1.4400000000000002"/><polygon points="210.4,228.7 288.9,273.4 288.9,303.1 210.4,258.4" fill="#3e3e3e" stroke="#e8e8e8" stroke-width=".8"/><polygon points="210.4,228.7 288.9,273.4 288.9,277.7 210.4,233.1" fill="#cfcfcf"/><polygon points="212.7,236.6 219.4,240.4 219.4,258.7 212.7,254.9" fill="#5c5c5c" stroke="#f4f4f4" stroke-width="1"/><polygon points="221.0,241.2 227.7,245.0 227.7,263.4 221.0,259.6" fill="#5c5c5c" stroke="#f4f4f4" stroke-width="1"/><polygon points="232.4,247.7 239.1,251.5 239.1,269.9 232.4,266.1" fill="#5c5c5c" stroke="#f4f4f4" stroke-width="1"/><polygon points="240.6,252.4 247.3,256.2 247.3,274.6 240.6,270.8" fill="#5c5c5c" stroke="#f4f4f4" stroke-width="1"/><polygon points="252.0,258.9 258.7,262.7 258.7,281.0 252.0,277.2" fill="#5c5c5c" stroke="#f4f4f4" stroke-width="1"/><polygon points="260.3,263.6 267.0,267.4 267.0,285.7 260.3,281.9" fill="#5c5c5c" stroke="#f4f4f4" stroke-width="1"/><polygon points="271.7,270.1 278.3,273.9 278.3,292.2 271.7,288.4" fill="#5c5c5c" stroke="#f4f4f4" stroke-width="1"/><polygon points="279.9,274.7 286.6,278.5 286.6,296.9 279.9,293.1" fill="#5c5c5c" stroke="#f4f4f4" stroke-width="1"/><rect x="207.4" y="227.9" width="6" height="30.5" fill="#4e3a22" stroke="#e8b468" stroke-width="1"/><rect x="227.0" y="239.1" width="6" height="30.5" fill="#4e3a22" stroke="#e8b468" stroke-width="1"/><rect x="246.7" y="250.3" width="6" height="30.5" fill="#4e3a22" stroke="#e8b468" stroke-width="1"/><rect x="266.3" y="261.4" width="6" height="30.5" fill="#4e3a22" stroke="#e8b468" stroke-width="1"/><rect x="285.9" y="272.6" width="6" height="30.5" fill="#4e3a22" stroke="#e8b468" stroke-width="1"/><polygon points="288.9,273.4 445.3,183.6 445.3,213.3 288.9,303.1" fill="#3e3e3e" stroke="#e8e8e8" stroke-width=".8"/><polygon points="288.9,273.4 445.3,183.6 445.3,187.9 288.9,277.7" fill="#cfcfcf"/><polygon points="291.3,278.5 297.9,274.7 297.9,293.1 291.3,296.9" fill="#5c5c5c" stroke="#f4f4f4" stroke-width="1"/><polygon points="299.5,273.8 306.1,270.0 306.1,288.4 299.5,292.2" fill="#5c5c5c" stroke="#f4f4f4" stroke-width="1"/><polygon points="310.8,267.3 317.5,263.5 317.5,281.9 310.8,285.7" fill="#5c5c5c" stroke="#f4f4f4" stroke-width="1"/><polygon points="319.0,262.6 325.7,258.8 325.7,277.1 319.0,281.0" fill="#5c5c5c" stroke="#f4f4f4" stroke-width="1"/><polygon points="330.4,256.1 337.0,252.3 337.0,270.6 330.4,274.4" fill="#5c5c5c" stroke="#f4f4f4" stroke-width="1"/><polygon points="338.6,251.4 345.2,247.6 345.2,265.9 338.6,269.7" fill="#5c5c5c" stroke="#f4f4f4" stroke-width="1"/><polygon points="349.9,244.9 356.6,241.0 356.6,259.4 349.9,263.2" fill="#5c5c5c" stroke="#f4f4f4" stroke-width="1"/><polygon points="358.1,240.1 364.8,236.3 364.8,254.7 358.1,258.5" fill="#5c5c5c" stroke="#f4f4f4" stroke-width="1"/><polygon points="369.5,233.6 376.1,229.8 376.1,248.2 369.5,252.0" fill="#5c5c5c" stroke="#f4f4f4" stroke-width="1"/><polygon points="377.7,228.9 384.3,225.1 384.3,243.5 377.7,247.3" fill="#5c5c5c" stroke="#f4f4f4" stroke-width="1"/><polygon points="389.0,222.4 395.7,218.6 395.7,237.0 389.0,240.8" fill="#5c5c5c" stroke="#f4f4f4" stroke-width="1"/><polygon points="397.2,217.7 403.9,213.9 403.9,232.2 397.2,236.1" fill="#5c5c5c" stroke="#f4f4f4" stroke-width="1"/><polygon points="408.6,211.2 415.2,207.4 415.2,225.7 408.6,229.5" fill="#5c5c5c" stroke="#f4f4f4" stroke-width="1"/><polygon points="416.8,206.5 423.4,202.7 423.4,221.0 416.8,224.8" fill="#5c5c5c" stroke="#f4f4f4" stroke-width="1"/><polygon points="428.1,200.0 434.8,196.1 434.8,214.5 428.1,218.3" fill="#5c5c5c" stroke="#f4f4f4" stroke-width="1"/><polygon points="436.3,195.2 443.0,191.4 443.0,209.8 436.3,213.6" fill="#5c5c5c" stroke="#f4f4f4" stroke-width="1"/><rect x="285.9" y="272.6" width="6" height="30.5" fill="#4e3a22" stroke="#e8b468" stroke-width="1"/><rect x="305.5" y="261.4" width="6" height="30.5" fill="#4e3a22" stroke="#e8b468" stroke-width="1"/><rect x="325.0" y="250.1" width="6" height="30.5" fill="#4e3a22" stroke="#e8b468" stroke-width="1"/><rect x="344.6" y="238.9" width="6" height="30.5" fill="#4e3a22" stroke="#e8b468" stroke-width="1"/><rect x="364.1" y="227.7" width="6" height="30.5" fill="#4e3a22" stroke="#e8b468" stroke-width="1"/><rect x="383.7" y="216.5" width="6" height="30.5" fill="#4e3a22" stroke="#e8b468" stroke-width="1"/><rect x="403.2" y="205.2" width="6" height="30.5" fill="#4e3a22" stroke="#e8b468" stroke-width="1"/><rect x="422.8" y="194.0" width="6" height="30.5" fill="#4e3a22" stroke="#e8b468" stroke-width="1"/><rect x="442.3" y="182.8" width="6" height="30.5" fill="#4e3a22" stroke="#e8b468" stroke-width="1"/><polygon points="210.4,228.7 366.8,138.9 445.3,183.6 288.9,273.4" fill="#7c7c7c" stroke="#fafafa" stroke-width="1.8"/><polygon points="214.7,80.9 237.1,68.0 272.0,87.9 249.7,100.7" fill="#4a4a4a" stroke="#fff" stroke-width="1.4400000000000002"/><polygon points="223.5,81.6 238.3,73.0 263.3,87.2 248.4,95.7" fill="#9a9a9a" stroke="#ddd" stroke-width="0.7200000000000001"/><polygon points="233.4,87.2 248.3,78.7 253.3,81.5 238.4,90.1" fill="#3a3a3a" stroke="#fff" stroke-width="0.7200000000000001"/><polygon points="383.1,176.6 405.4,163.8 440.3,183.6 418.0,196.4" fill="#4a4a4a" stroke="#fff" stroke-width="1.4400000000000002"/><polygon points="391.8,177.3 406.7,168.7 431.6,182.9 416.7,191.5" fill="#9a9a9a" stroke="#ddd" stroke-width="0.7200000000000001"/><polygon points="401.8,183.0 416.7,174.4 421.7,177.2 406.8,185.8" fill="#3a3a3a" stroke="#fff" stroke-width="0.7200000000000001"/><polygon points="174.2,192.5 239.9,154.8 289.8,183.1 224.0,220.9" fill="#7c7c7c" stroke="#fff" stroke-width="1.26"/><polygon points="210.1,171.9 239.9,154.8 289.8,183.1 260.0,200.2" fill="#7c7c7c" stroke="#fff" stroke-width="1.08"/><polygon points="215.1,169.0 239.9,154.8 249.9,160.4 225.1,174.7" fill="#4a4a4a" stroke="#fff" stroke-width="0.9"/><polygon points="205.3,200.3 227.6,187.5 247.6,198.8 225.2,211.7" fill="#fff" stroke="#fff" stroke-width="0.7200000000000001"/><polygon points="210.3,200.3 219.0,195.3 233.9,203.8 225.2,208.8" fill="#4a4a4a" stroke="#4a4a4a" stroke-width="0.3"/><polygon points="221.4,193.9 227.6,190.3 242.6,198.8 236.4,202.4" fill="#4a4a4a" stroke="#4a4a4a" stroke-width="0.3"/><polygon points="175.4,191.8 192.8,181.8 200.3,186.1 182.9,196.1" fill="#aaa" stroke="#fff" stroke-width="0.9"/><circle cx="80.7" cy="155.0" r="1.6" fill="#e0b060"/><circle cx="100.2" cy="143.8" r="1.6" fill="#e0b060"/><circle cx="119.8" cy="132.5" r="1.6" fill="#e0b060"/><circle cx="139.3" cy="121.3" r="1.6" fill="#e0b060"/><circle cx="158.9" cy="110.1" r="1.6" fill="#e0b060"/><circle cx="178.4" cy="98.9" r="1.6" fill="#e0b060"/><circle cx="198.0" cy="87.6" r="1.6" fill="#e0b060"/><circle cx="217.5" cy="76.4" r="1.6" fill="#e0b060"/><circle cx="237.1" cy="65.2" r="1.6" fill="#e0b060"/><circle cx="237.1" cy="65.2" r="1.6" fill="#e0b060"/><circle cx="257.0" cy="76.5" r="1.6" fill="#e0b060"/><circle cx="277.0" cy="87.9" r="1.6" fill="#e0b060"/><circle cx="296.9" cy="99.2" r="1.6" fill="#e0b060"/><circle cx="316.9" cy="110.6" r="1.6" fill="#e0b060"/><circle cx="210.4" cy="228.7" r="1.6" fill="#e0b060"/><circle cx="229.9" cy="217.5" r="1.6" fill="#e0b060"/><circle cx="249.5" cy="206.3" r="1.6" fill="#e0b060"/><circle cx="269.0" cy="195.1" r="1.6" fill="#e0b060"/><circle cx="288.6" cy="183.8" r="1.6" fill="#e0b060"/><circle cx="308.1" cy="172.6" r="1.6" fill="#e0b060"/><circle cx="327.7" cy="161.4" r="1.6" fill="#e0b060"/><circle cx="347.2" cy="150.2" r="1.6" fill="#e0b060"/><circle cx="366.8" cy="138.9" r="1.6" fill="#e0b060"/><circle cx="366.8" cy="138.9" r="1.6" fill="#e0b060"/><circle cx="386.4" cy="150.1" r="1.6" fill="#e0b060"/><circle cx="406.0" cy="161.3" r="1.6" fill="#e0b060"/><circle cx="425.7" cy="172.4" r="1.6" fill="#e0b060"/><circle cx="445.3" cy="183.6" r="1.6" fill="#e0b060"/><ellipse cx="159.7" cy="155.2" rx="2.5" ry="1.6" fill="none" stroke="#d8c080" stroke-width=".9"/><ellipse cx="198.8" cy="132.8" rx="2.5" ry="1.6" fill="none" stroke="#d8c080" stroke-width=".9"/><ellipse cx="237.9" cy="110.3" rx="2.5" ry="1.6" fill="none" stroke="#d8c080" stroke-width=".9"/><ellipse cx="288.8" cy="228.6" rx="2.5" ry="1.6" fill="none" stroke="#d8c080" stroke-width=".9"/><ellipse cx="327.9" cy="206.2" rx="2.5" ry="1.6" fill="none" stroke="#d8c080" stroke-width=".9"/><ellipse cx="366.9" cy="183.7" rx="2.5" ry="1.6" fill="none" stroke="#d8c080" stroke-width=".9"/></svg></div></div><div class="win" style="left:211px;top:542px"><svg class="a" style="left:9px;top:9px" width="17" height="17" viewBox="0 0 17 17" ><path d="M1 1 H8 Q15 1 15 6 Q15 11 8 11 H6 V16 H1 Z" fill="#1ea078"/><path d="M6 4 H8 Q11 4 11 6 Q11 8 8 8 H6 Z" fill="#7ad8b0"/><text x="6" y="16" font-size="5.5" font-weight="bold" fill="#e07820" font-family="Liberation Sans">BIM</text></svg><div class="wt">ArchiCAD-StoreyList-给排水-模型-楼层3-副本2</div><div class="wb" style="left:507px"><div class="a" style="left:9px;top:7px;width:11px;height:5px;border:1px solid #2a3a50;border-radius:1px;background:#fff"></div></div><div class="wb" style="left:540px"><div class="a" style="left:10px;top:3px;width:11px;height:9px;border:1px solid #2a3a50;border-radius:1px;background:#fff"><div class="a" style="left:2px;top:2px;width:5px;height:3px;border:1px solid #2a3a50"></div></div></div><div class="wb x" style="left:573px"><svg class="a" style="left:9px;top:3px" width="13" height="10" viewBox="0 0 13 10" ><path d="M2.8 1.8 L10.2 8.2 M10.2 1.8 L2.8 8.2" stroke="#7a4a40" stroke-width="4.6"/><path d="M2.8 1.8 L10.2 8.2 M10.2 1.8 L2.8 8.2" stroke="#fff" stroke-width="3"/></svg></div><div class="vp"><svg class="a" style="left:0;top:0" width="596" height="328"><line x1="156.8" y1="154.6" x2="356.8" y2="210.8" stroke="#8c8c8c" stroke-width="1.6" stroke-dasharray="10 5 3 5"/><line x1="206.7" y1="151.1" x2="406.8" y2="207.2" stroke="#8c8c8c" stroke-width="1.6" stroke-dasharray="10 5 3 5"/><line x1="256.6" y1="147.5" x2="456.7" y2="203.6" stroke="#8c8c8c" stroke-width="1.6" stroke-dasharray="10 5 3 5"/><line x1="306.5" y1="144.0" x2="506.6" y2="200.1" stroke="#8c8c8c" stroke-width="1.6" stroke-dasharray="10 5 3 5"/><line x1="356.5" y1="140.4" x2="556.6" y2="196.5" stroke="#8c8c8c" stroke-width="1.6" stroke-dasharray="10 5 3 5"/><line x1="121.2" y1="166.4" x2="447.7" y2="143.1" stroke="#8c8c8c" stroke-width="1.6" stroke-dasharray="10 5 3 5"/><line x1="147.4" y1="173.8" x2="473.9" y2="150.5" stroke="#8c8c8c" stroke-width="1.6" stroke-dasharray="10 5 3 5"/><line x1="173.7" y1="181.1" x2="500.2" y2="157.8" stroke="#8c8c8c" stroke-width="1.6" stroke-dasharray="10 5 3 5"/><line x1="206.5" y1="190.3" x2="533.0" y2="167.0" stroke="#8c8c8c" stroke-width="1.6" stroke-dasharray="10 5 3 5"/><line x1="232.3" y1="197.6" x2="558.8" y2="174.3" stroke="#8c8c8c" stroke-width="1.6" stroke-dasharray="10 5 3 5"/><line x1="258.1" y1="204.8" x2="584.6" y2="181.5" stroke="#8c8c8c" stroke-width="1.6" stroke-dasharray="10 5 3 5"/><polygon points="183.0,130.0 235.5,144.7 235.5,179.9 183.0,165.2" fill="#5a5a5a" stroke="#e8e8e8" stroke-width=".8"/><polygon points="183.0,130.0 235.5,144.7 235.5,149.8 183.0,135.1" fill="#cfcfcf"/><polygon points="184.6,138.1 189.0,139.4 189.0,161.1 184.6,159.9" fill="#a4a4a4" stroke="#f4f4f4" stroke-width="1"/><polygon points="190.1,139.7 194.5,140.9 194.5,162.7 190.1,161.4" fill="#a4a4a4" stroke="#f4f4f4" stroke-width="1"/><polygon points="197.7,141.8 202.2,143.1 202.2,164.8 197.7,163.6" fill="#a4a4a4" stroke="#f4f4f4" stroke-width="1"/><polygon points="203.2,143.3 207.7,144.6 207.7,166.4 203.2,165.1" fill="#a4a4a4" stroke="#f4f4f4" stroke-width="1"/><polygon points="210.8,145.5 215.3,146.7 215.3,168.5 210.8,167.2" fill="#a4a4a4" stroke="#f4f4f4" stroke-width="1"/><polygon points="216.3,147.0 220.8,148.3 220.8,170.0 216.3,168.8" fill="#a4a4a4" stroke="#f4f4f4" stroke-width="1"/><polygon points="223.9,149.2 228.4,150.4 228.4,172.2 223.9,170.9" fill="#a4a4a4" stroke="#f4f4f4" stroke-width="1"/><polygon points="229.4,150.7 233.9,152.0 233.9,173.7 229.4,172.5" fill="#a4a4a4" stroke="#f4f4f4" stroke-width="1"/><rect x="180.5" y="129.0" width="5" height="36.2" fill="#4e3a22" stroke="#e8b468" stroke-width="1"/><rect x="193.6" y="132.7" width="5" height="36.2" fill="#4e3a22" stroke="#e8b468" stroke-width="1"/><rect x="206.7" y="136.4" width="5" height="36.2" fill="#4e3a22" stroke="#e8b468" stroke-width="1"/><rect x="219.9" y="140.1" width="5" height="36.2" fill="#4e3a22" stroke="#e8b468" stroke-width="1"/><rect x="233.0" y="143.8" width="5" height="36.2" fill="#4e3a22" stroke="#e8b468" stroke-width="1"/><polygon points="235.5,144.7 435.2,130.5 435.2,165.7 235.5,179.9" fill="#5a5a5a" stroke="#e8e8e8" stroke-width=".8"/><polygon points="235.5,144.7 435.2,130.5 435.2,135.6 235.5,149.8" fill="#cfcfcf"/><polygon points="238.1,152.2 245.7,151.7 245.7,173.4 238.1,174.0" fill="#a4a4a4" stroke="#f4f4f4" stroke-width="1"/><polygon points="247.5,151.5 255.0,151.0 255.0,172.8 247.5,173.3" fill="#a4a4a4" stroke="#f4f4f4" stroke-width="1"/><polygon points="260.3,150.6 267.9,150.1 267.9,171.9 260.3,172.4" fill="#a4a4a4" stroke="#f4f4f4" stroke-width="1"/><polygon points="269.7,150.0 277.2,149.4 277.2,171.2 269.7,171.7" fill="#a4a4a4" stroke="#f4f4f4" stroke-width="1"/><polygon points="282.5,149.0 290.1,148.5 290.1,170.3 282.5,170.8" fill="#a4a4a4" stroke="#f4f4f4" stroke-width="1"/><polygon points="291.8,148.4 299.4,147.8 299.4,169.6 291.8,170.1" fill="#a4a4a4" stroke="#f4f4f4" stroke-width="1"/><polygon points="304.7,147.5 312.3,146.9 312.3,168.7 304.7,169.2" fill="#a4a4a4" stroke="#f4f4f4" stroke-width="1"/><polygon points="314.0,146.8 321.6,146.3 321.6,168.0 314.0,168.6" fill="#a4a4a4" stroke="#f4f4f4" stroke-width="1"/><polygon points="326.9,145.9 334.4,145.3 334.4,167.1 326.9,167.6" fill="#a4a4a4" stroke="#f4f4f4" stroke-width="1"/><polygon points="336.2,145.2 343.8,144.7 343.8,166.4 336.2,167.0" fill="#a4a4a4" stroke="#f4f4f4" stroke-width="1"/><polygon points="349.1,144.3 356.6,143.8 356.6,165.5 349.1,166.1" fill="#a4a4a4" stroke="#f4f4f4" stroke-width="1"/><polygon points="358.4,143.6 366.0,143.1 366.0,164.9 358.4,165.4" fill="#a4a4a4" stroke="#f4f4f4" stroke-width="1"/><polygon points="371.3,142.7 378.8,142.2 378.8,163.9 371.3,164.5" fill="#a4a4a4" stroke="#f4f4f4" stroke-width="1"/><polygon points="380.6,142.1 388.1,141.5 388.1,163.3 380.6,163.8" fill="#a4a4a4" stroke="#f4f4f4" stroke-width="1"/><polygon points="393.5,141.1 401.0,140.6 401.0,162.4 393.5,162.9" fill="#a4a4a4" stroke="#f4f4f4" stroke-width="1"/><polygon points="402.8,140.5 410.3,139.9 410.3,161.7 402.8,162.2" fill="#a4a4a4" stroke="#f4f4f4" stroke-width="1"/><polygon points="415.7,139.6 423.2,139.0 423.2,160.8 415.7,161.3" fill="#a4a4a4" stroke="#f4f4f4" stroke-width="1"/><polygon points="425.0,138.9 432.5,138.4 432.5,160.1 425.0,160.6" fill="#a4a4a4" stroke="#f4f4f4" stroke-width="1"/><rect x="233.0" y="143.8" width="5" height="36.2" fill="#4e3a22" stroke="#e8b468" stroke-width="1"/><rect x="255.2" y="142.2" width="5" height="36.2" fill="#4e3a22" stroke="#e8b468" stroke-width="1"/><rect x="277.4" y="140.6" width="5" height="36.2" fill="#4e3a22" stroke="#e8b468" stroke-width="1"/><rect x="299.5" y="139.0" width="5" height="36.2" fill="#4e3a22" stroke="#e8b468" stroke-width="1"/><rect x="321.7" y="137.4" width="5" height="36.2" fill="#4e3a22" stroke="#e8b468" stroke-width="1"/><rect x="343.9" y="135.9" width="5" height="36.2" fill="#4e3a22" stroke="#e8b468" stroke-width="1"/><rect x="366.1" y="134.3" width="5" height="36.2" fill="#4e3a22" stroke="#e8b468" stroke-width="1"/><rect x="388.3" y="132.7" width="5" height="36.2" fill="#4e3a22" stroke="#e8b468" stroke-width="1"/><rect x="410.5" y="131.1" width="5" height="36.2" fill="#4e3a22" stroke="#e8b468" stroke-width="1"/><rect x="432.7" y="129.5" width="5" height="36.2" fill="#4e3a22" stroke="#e8b468" stroke-width="1"/><polygon points="183.0,130.0 382.7,115.8 435.2,130.5 235.5,144.7" fill="#4a4a4a" stroke="#fafafa" stroke-width="1.6"/><polygon points="252.9,143.5 285.7,152.7 285.7,187.9 252.9,178.7" fill="#5a5a5a" stroke="#e8e8e8" stroke-width=".8"/><polygon points="252.9,143.5 285.7,152.7 285.7,157.8 252.9,148.6" fill="#cfcfcf"/><polygon points="254.9,151.7 260.5,153.3 260.5,175.0 254.9,173.5" fill="#a4a4a4" stroke="#f4f4f4" stroke-width="1"/><polygon points="261.8,153.6 267.3,155.2 267.3,177.0 261.8,175.4" fill="#a4a4a4" stroke="#f4f4f4" stroke-width="1"/><polygon points="271.3,156.3 276.9,157.9 276.9,179.6 271.3,178.1" fill="#a4a4a4" stroke="#f4f4f4" stroke-width="1"/><polygon points="278.2,158.2 283.7,159.8 283.7,181.6 278.2,180.0" fill="#a4a4a4" stroke="#f4f4f4" stroke-width="1"/><rect x="250.9" y="142.5" width="4.0" height="36.2" fill="#4e3a22" stroke="#e8b468" stroke-width="1"/><rect x="267.3" y="147.1" width="4.0" height="36.2" fill="#4e3a22" stroke="#e8b468" stroke-width="1"/><rect x="283.7" y="151.7" width="4.0" height="36.2" fill="#4e3a22" stroke="#e8b468" stroke-width="1"/><polygon points="285.7,152.7 369.7,146.7 369.7,181.9 285.7,187.9" fill="#5a5a5a" stroke="#e8e8e8" stroke-width=".8"/><polygon points="285.7,152.7 369.7,146.7 369.7,151.8 285.7,157.8" fill="#cfcfcf"/><polygon points="289.1,160.1 298.6,159.4 298.6,181.2 289.1,181.9" fill="#a4a4a4" stroke="#f4f4f4" stroke-width="1"/><polygon points="300.8,159.3 310.4,158.6 310.4,180.4 300.8,181.0" fill="#a4a4a4" stroke="#f4f4f4" stroke-width="1"/><polygon points="317.1,158.1 326.6,157.4 326.6,179.2 317.1,179.9" fill="#a4a4a4" stroke="#f4f4f4" stroke-width="1"/><polygon points="328.8,157.3 338.4,156.6 338.4,178.4 328.8,179.0" fill="#a4a4a4" stroke="#f4f4f4" stroke-width="1"/><polygon points="345.1,156.1 354.6,155.4 354.6,177.2 345.1,177.9" fill="#a4a4a4" stroke="#f4f4f4" stroke-width="1"/><polygon points="356.8,155.3 366.4,154.6 366.4,176.4 356.8,177.0" fill="#a4a4a4" stroke="#f4f4f4" stroke-width="1"/><rect x="283.7" y="151.7" width="4.0" height="36.2" fill="#4e3a22" stroke="#e8b468" stroke-width="1"/><rect x="311.7" y="149.7" width="4.0" height="36.2" fill="#4e3a22" stroke="#e8b468" stroke-width="1"/><rect x="339.7" y="147.7" width="4.0" height="36.2" fill="#4e3a22" stroke="#e8b468" stroke-width="1"/><rect x="367.7" y="145.7" width="4.0" height="36.2" fill="#4e3a22" stroke="#e8b468" stroke-width="1"/><polygon points="252.9,143.5 336.9,137.5 369.7,146.7 285.7,152.7" fill="#4a4a4a" stroke="#fafafa" stroke-width="1.2800000000000002"/><polygon points="268.3,153.9 319.9,168.4 319.9,203.6 268.3,189.1" fill="#5a5a5a" stroke="#e8e8e8" stroke-width=".8"/><polygon points="268.3,153.9 319.9,168.4 319.9,173.5 268.3,159.0" fill="#cfcfcf"/><polygon points="269.8,162.0 274.2,163.3 274.2,185.0 269.8,183.8" fill="#a4a4a4" stroke="#f4f4f4" stroke-width="1"/><polygon points="275.3,163.6 279.6,164.8 279.6,186.5 275.3,185.3" fill="#a4a4a4" stroke="#f4f4f4" stroke-width="1"/><polygon points="282.7,165.7 287.1,166.9 287.1,188.6 282.7,187.4" fill="#a4a4a4" stroke="#f4f4f4" stroke-width="1"/><polygon points="288.2,167.2 292.6,168.4 292.6,190.2 288.2,188.9" fill="#a4a4a4" stroke="#f4f4f4" stroke-width="1"/><polygon points="295.7,169.3 300.1,170.5 300.1,192.3 295.7,191.0" fill="#a4a4a4" stroke="#f4f4f4" stroke-width="1"/><polygon points="301.1,170.8 305.5,172.0 305.5,193.8 301.1,192.6" fill="#a4a4a4" stroke="#f4f4f4" stroke-width="1"/><polygon points="308.6,172.9 313.0,174.1 313.0,195.9 308.6,194.7" fill="#a4a4a4" stroke="#f4f4f4" stroke-width="1"/><polygon points="314.0,174.4 318.4,175.7 318.4,197.4 314.0,196.2" fill="#a4a4a4" stroke="#f4f4f4" stroke-width="1"/><rect x="265.8" y="153.0" width="5" height="36.2" fill="#4e3a22" stroke="#e8b468" stroke-width="1"/><rect x="278.7" y="156.6" width="5" height="36.2" fill="#4e3a22" stroke="#e8b468" stroke-width="1"/><rect x="291.6" y="160.2" width="5" height="36.2" fill="#4e3a22" stroke="#e8b468" stroke-width="1"/><rect x="304.5" y="163.8" width="5" height="36.2" fill="#4e3a22" stroke="#e8b468" stroke-width="1"/><rect x="317.4" y="167.4" width="5" height="36.2" fill="#4e3a22" stroke="#e8b468" stroke-width="1"/><polygon points="319.9,168.4 519.7,154.2 519.7,189.4 319.9,203.6" fill="#5a5a5a" stroke="#e8e8e8" stroke-width=".8"/><polygon points="319.9,168.4 519.7,154.2 519.7,159.3 319.9,173.5" fill="#cfcfcf"/><polygon points="322.6,175.9 330.1,175.4 330.1,197.1 322.6,197.7" fill="#a4a4a4" stroke="#f4f4f4" stroke-width="1"/><polygon points="331.9,175.2 339.5,174.7 339.5,196.5 331.9,197.0" fill="#a4a4a4" stroke="#f4f4f4" stroke-width="1"/><polygon points="344.8,174.3 352.3,173.8 352.3,195.5 344.8,196.1" fill="#a4a4a4" stroke="#f4f4f4" stroke-width="1"/><polygon points="354.1,173.7 361.7,173.1 361.7,194.9 354.1,195.4" fill="#a4a4a4" stroke="#f4f4f4" stroke-width="1"/><polygon points="367.0,172.7 374.5,172.2 374.5,194.0 367.0,194.5" fill="#a4a4a4" stroke="#f4f4f4" stroke-width="1"/><polygon points="376.3,172.1 383.8,171.5 383.8,193.3 376.3,193.8" fill="#a4a4a4" stroke="#f4f4f4" stroke-width="1"/><polygon points="389.2,171.2 396.7,170.6 396.7,192.4 389.2,192.9" fill="#a4a4a4" stroke="#f4f4f4" stroke-width="1"/><polygon points="398.5,170.5 406.0,170.0 406.0,191.7 398.5,192.2" fill="#a4a4a4" stroke="#f4f4f4" stroke-width="1"/><polygon points="411.4,169.6 418.9,169.0 418.9,190.8 411.4,191.3" fill="#a4a4a4" stroke="#f4f4f4" stroke-width="1"/><polygon points="420.7,168.9 428.2,168.4 428.2,190.1 420.7,190.7" fill="#a4a4a4" stroke="#f4f4f4" stroke-width="1"/><polygon points="433.6,168.0 441.1,167.5 441.1,189.2 433.6,189.8" fill="#a4a4a4" stroke="#f4f4f4" stroke-width="1"/><polygon points="442.9,167.3 450.4,166.8 450.4,188.5 442.9,189.1" fill="#a4a4a4" stroke="#f4f4f4" stroke-width="1"/><polygon points="455.7,166.4 463.3,165.9 463.3,187.6 455.7,188.2" fill="#a4a4a4" stroke="#f4f4f4" stroke-width="1"/><polygon points="465.1,165.7 472.6,165.2 472.6,187.0 465.1,187.5" fill="#a4a4a4" stroke="#f4f4f4" stroke-width="1"/><polygon points="477.9,164.8 485.5,164.3 485.5,186.0 477.9,186.6" fill="#a4a4a4" stroke="#f4f4f4" stroke-width="1"/><polygon points="487.3,164.2 494.8,163.6 494.8,185.4 487.3,185.9" fill="#a4a4a4" stroke="#f4f4f4" stroke-width="1"/><polygon points="500.1,163.2 507.7,162.7 507.7,184.5 500.1,185.0" fill="#a4a4a4" stroke="#f4f4f4" stroke-width="1"/><polygon points="509.4,162.6 517.0,162.0 517.0,183.8 509.4,184.3" fill="#a4a4a4" stroke="#f4f4f4" stroke-width="1"/><rect x="317.4" y="167.4" width="5" height="36.2" fill="#4e3a22" stroke="#e8b468" stroke-width="1"/><rect x="339.6" y="165.9" width="5" height="36.2" fill="#4e3a22" stroke="#e8b468" stroke-width="1"/><rect x="361.8" y="164.3" width="5" height="36.2" fill="#4e3a22" stroke="#e8b468" stroke-width="1"/><rect x="384.0" y="162.7" width="5" height="36.2" fill="#4e3a22" stroke="#e8b468" stroke-width="1"/><rect x="406.2" y="161.1" width="5" height="36.2" fill="#4e3a22" stroke="#e8b468" stroke-width="1"/><rect x="428.4" y="159.5" width="5" height="36.2" fill="#4e3a22" stroke="#e8b468" stroke-width="1"/><rect x="450.6" y="158.0" width="5" height="36.2" fill="#4e3a22" stroke="#e8b468" stroke-width="1"/><rect x="472.8" y="156.4" width="5" height="36.2" fill="#4e3a22" stroke="#e8b468" stroke-width="1"/><rect x="495.0" y="154.8" width="5" height="36.2" fill="#4e3a22" stroke="#e8b468" stroke-width="1"/><rect x="517.2" y="153.2" width="5" height="36.2" fill="#4e3a22" stroke="#e8b468" stroke-width="1"/><polygon points="268.3,153.9 468.0,139.7 519.7,154.2 319.9,168.4" fill="#4a4a4a" stroke="#fafafa" stroke-width="1.6"/><polygon points="352.6,118.5 381.2,116.4 404.1,122.9 375.6,124.9" fill="#4a4a4a" stroke="#fff" stroke-width="1.2800000000000002"/><polygon points="360.7,119.1 379.7,117.7 396.1,122.3 377.1,123.7" fill="#9a9a9a" stroke="#ddd" stroke-width="0.6400000000000001"/><polygon points="367.2,120.9 386.3,119.5 389.5,120.5 370.5,121.8" fill="#3a3a3a" stroke="#fff" stroke-width="0.6400000000000001"/><polygon points="463.4,149.5 491.9,147.5 514.8,153.9 486.3,156.0" fill="#4a4a4a" stroke="#fff" stroke-width="1.2800000000000002"/><polygon points="471.4,150.1 490.4,148.8 506.8,153.4 487.8,154.7" fill="#9a9a9a" stroke="#ddd" stroke-width="0.6400000000000001"/><polygon points="477.9,152.0 497.0,150.6 500.2,151.5 481.2,152.9" fill="#3a3a3a" stroke="#fff" stroke-width="0.6400000000000001"/><polygon points="252.9,143.5 336.9,137.5 369.7,146.7 285.7,152.7" fill="#4a4a4a" stroke="#fff" stroke-width="1.1199999999999999"/><polygon points="298.9,140.2 336.9,137.5 369.7,146.7 331.7,149.4" fill="#4a4a4a" stroke="#fff" stroke-width="0.96"/><polygon points="305.2,139.7 336.9,137.5 343.5,139.3 311.8,141.6" fill="#4a4a4a" stroke="#fff" stroke-width="0.8"/><polygon points="278.8,146.8 307.3,144.8 320.4,148.5 291.9,150.5" fill="#fff" stroke="#fff" stroke-width="0.6400000000000001"/><polygon points="283.6,147.1 294.7,146.3 304.5,149.0 293.4,149.8" fill="#4a4a4a" stroke="#4a4a4a" stroke-width="0.3"/><polygon points="297.8,146.0 305.8,145.5 315.6,148.2 307.7,148.8" fill="#4a4a4a" stroke="#4a4a4a" stroke-width="0.3"/><polygon points="254.5,143.4 276.7,141.8 281.6,143.2 259.4,144.7" fill="#aaa" stroke="#fff" stroke-width="0.8"/></svg></div></div><div class="win" style="left:826px;top:542px"><svg class="a" style="left:9px;top:9px" width="17" height="17" viewBox="0 0 17 17" ><path d="M1 1 H8 Q15 1 15 6 Q15 11 8 11 H6 V16 H1 Z" fill="#1ea078"/><path d="M6 4 H8 Q11 4 11 6 Q11 8 8 8 H6 Z" fill="#7ad8b0"/><text x="6" y="16" font-size="5.5" font-weight="bold" fill="#e07820" font-family="Liberation Sans">BIM</text></svg><div class="wt">ArchiCAD-StoreyList-给排水-模型-楼层3</div><div class="wb" style="left:507px"><div class="a" style="left:9px;top:7px;width:11px;height:5px;border:1px solid #2a3a50;border-radius:1px;background:#fff"></div></div><div class="wb" style="left:540px"><div class="a" style="left:10px;top:3px;width:11px;height:9px;border:1px solid #2a3a50;border-radius:1px;background:#fff"><div class="a" style="left:2px;top:2px;width:5px;height:3px;border:1px solid #2a3a50"></div></div></div><div class="wb x" style="left:573px"><svg class="a" style="left:9px;top:3px" width="13" height="10" viewBox="0 0 13 10" ><path d="M2.8 1.8 L10.2 8.2 M10.2 1.8 L2.8 8.2" stroke="#7a4a40" stroke-width="4.6"/><path d="M2.8 1.8 L10.2 8.2 M10.2 1.8 L2.8 8.2" stroke="#fff" stroke-width="3"/></svg></div><div class="vp"><svg class="a" style="left:0;top:0" width="596" height="328"><line x1="321.1" y1="140.5" x2="168.1" y2="188.0" stroke="#8c8c8c" stroke-width="1.6" stroke-dasharray="7 4 2 4"/><line x1="345.3" y1="145.7" x2="192.3" y2="193.3" stroke="#8c8c8c" stroke-width="1.6" stroke-dasharray="7 4 2 4"/><line x1="369.5" y1="150.9" x2="216.5" y2="198.5" stroke="#8c8c8c" stroke-width="1.6" stroke-dasharray="7 4 2 4"/><line x1="393.7" y1="156.1" x2="240.7" y2="203.7" stroke="#8c8c8c" stroke-width="1.6" stroke-dasharray="7 4 2 4"/><line x1="418.0" y1="161.4" x2="265.0" y2="209.0" stroke="#8c8c8c" stroke-width="1.6" stroke-dasharray="7 4 2 4"/><line x1="271.0" y1="140.2" x2="429.4" y2="174.4" stroke="#8c8c8c" stroke-width="1.6" stroke-dasharray="7 4 2 4"/><line x1="250.9" y1="146.5" x2="409.4" y2="180.7" stroke="#8c8c8c" stroke-width="1.6" stroke-dasharray="7 4 2 4"/><line x1="230.9" y1="152.7" x2="389.3" y2="186.9" stroke="#8c8c8c" stroke-width="1.6" stroke-dasharray="7 4 2 4"/><line x1="205.8" y1="160.5" x2="364.2" y2="194.7" stroke="#8c8c8c" stroke-width="1.6" stroke-dasharray="7 4 2 4"/><line x1="186.1" y1="166.6" x2="344.5" y2="200.8" stroke="#8c8c8c" stroke-width="1.6" stroke-dasharray="7 4 2 4"/><line x1="166.3" y1="172.8" x2="324.7" y2="207.0" stroke="#8c8c8c" stroke-width="1.6" stroke-dasharray="7 4 2 4"/><polygon points="357.8,163.4 397.9,150.9 397.9,169.3 357.8,181.8" fill="#6a6a6a" stroke="#e8e8e8" stroke-width=".8"/><polygon points="357.8,163.4 397.9,150.9 397.9,153.6 357.8,166.1" fill="#cfcfcf"/><polygon points="359.0,167.0 362.4,166.0 362.4,177.3 359.0,178.4" fill="#c4c4c4" stroke="#f4f4f4" stroke-width="1"/><polygon points="363.2,165.7 366.6,164.7 366.6,176.0 363.2,177.1" fill="#c4c4c4" stroke="#f4f4f4" stroke-width="1"/><polygon points="369.0,163.9 372.4,162.8 372.4,174.2 369.0,175.3" fill="#c4c4c4" stroke="#f4f4f4" stroke-width="1"/><polygon points="373.2,162.6 376.6,161.5 376.6,172.9 373.2,174.0" fill="#c4c4c4" stroke="#f4f4f4" stroke-width="1"/><polygon points="379.0,160.8 382.4,159.7 382.4,171.1 379.0,172.1" fill="#c4c4c4" stroke="#f4f4f4" stroke-width="1"/><polygon points="383.2,159.5 386.7,158.4 386.7,169.8 383.2,170.8" fill="#c4c4c4" stroke="#f4f4f4" stroke-width="1"/><polygon points="389.1,157.7 392.5,156.6 392.5,168.0 389.1,169.0" fill="#c4c4c4" stroke="#f4f4f4" stroke-width="1"/><polygon points="393.3,156.4 396.7,155.3 396.7,166.7 393.3,167.7" fill="#c4c4c4" stroke="#f4f4f4" stroke-width="1"/><rect x="356.1" y="162.9" width="3.4" height="18.9" fill="#4e3a22" stroke="#e8b468" stroke-width="1"/><rect x="366.1" y="159.8" width="3.4" height="18.9" fill="#4e3a22" stroke="#e8b468" stroke-width="1"/><rect x="376.1" y="156.7" width="3.4" height="18.9" fill="#4e3a22" stroke="#e8b468" stroke-width="1"/><rect x="386.2" y="153.5" width="3.4" height="18.9" fill="#4e3a22" stroke="#e8b468" stroke-width="1"/><rect x="396.2" y="150.4" width="3.4" height="18.9" fill="#4e3a22" stroke="#e8b468" stroke-width="1"/><polygon points="260.9,142.5 357.8,163.4 357.8,181.8 260.9,160.9" fill="#6a6a6a" stroke="#e8e8e8" stroke-width=".8"/><polygon points="260.9,142.5 357.8,163.4 357.8,166.1 260.9,145.2" fill="#cfcfcf"/><polygon points="262.2,146.8 265.8,147.6 265.8,158.9 262.2,158.1" fill="#c4c4c4" stroke="#f4f4f4" stroke-width="1"/><polygon points="266.7,147.7 270.3,148.5 270.3,159.9 266.7,159.1" fill="#c4c4c4" stroke="#f4f4f4" stroke-width="1"/><polygon points="272.9,149.1 276.6,149.9 276.6,161.2 272.9,160.4" fill="#c4c4c4" stroke="#f4f4f4" stroke-width="1"/><polygon points="277.5,150.1 281.1,150.9 281.1,162.2 277.5,161.4" fill="#c4c4c4" stroke="#f4f4f4" stroke-width="1"/><polygon points="283.7,151.4 287.4,152.2 287.4,163.6 283.7,162.8" fill="#c4c4c4" stroke="#f4f4f4" stroke-width="1"/><polygon points="288.2,152.4 291.9,153.2 291.9,164.5 288.2,163.7" fill="#c4c4c4" stroke="#f4f4f4" stroke-width="1"/><polygon points="294.5,153.7 298.1,154.5 298.1,165.9 294.5,165.1" fill="#c4c4c4" stroke="#f4f4f4" stroke-width="1"/><polygon points="299.0,154.7 302.6,155.5 302.6,166.9 299.0,166.1" fill="#c4c4c4" stroke="#f4f4f4" stroke-width="1"/><polygon points="305.2,156.1 308.9,156.9 308.9,168.2 305.2,167.4" fill="#c4c4c4" stroke="#f4f4f4" stroke-width="1"/><polygon points="309.7,157.0 313.4,157.8 313.4,169.2 309.7,168.4" fill="#c4c4c4" stroke="#f4f4f4" stroke-width="1"/><polygon points="316.0,158.4 319.7,159.2 319.7,170.5 316.0,169.7" fill="#c4c4c4" stroke="#f4f4f4" stroke-width="1"/><polygon points="320.5,159.4 324.2,160.2 324.2,171.5 320.5,170.7" fill="#c4c4c4" stroke="#f4f4f4" stroke-width="1"/><polygon points="326.8,160.7 330.4,161.5 330.4,172.9 326.8,172.1" fill="#c4c4c4" stroke="#f4f4f4" stroke-width="1"/><polygon points="331.3,161.7 334.9,162.5 334.9,173.8 331.3,173.0" fill="#c4c4c4" stroke="#f4f4f4" stroke-width="1"/><polygon points="337.5,163.0 341.2,163.8 341.2,175.2 337.5,174.4" fill="#c4c4c4" stroke="#f4f4f4" stroke-width="1"/><polygon points="342.0,164.0 345.7,164.8 345.7,176.2 342.0,175.4" fill="#c4c4c4" stroke="#f4f4f4" stroke-width="1"/><polygon points="348.3,165.4 352.0,166.1 352.0,177.5 348.3,176.7" fill="#c4c4c4" stroke="#f4f4f4" stroke-width="1"/><polygon points="352.8,166.3 356.5,167.1 356.5,178.5 352.8,177.7" fill="#c4c4c4" stroke="#f4f4f4" stroke-width="1"/><rect x="259.2" y="142.0" width="3.4" height="18.9" fill="#4e3a22" stroke="#e8b468" stroke-width="1"/><rect x="269.9" y="144.3" width="3.4" height="18.9" fill="#4e3a22" stroke="#e8b468" stroke-width="1"/><rect x="280.7" y="146.6" width="3.4" height="18.9" fill="#4e3a22" stroke="#e8b468" stroke-width="1"/><rect x="291.5" y="149.0" width="3.4" height="18.9" fill="#4e3a22" stroke="#e8b468" stroke-width="1"/><rect x="302.2" y="151.3" width="3.4" height="18.9" fill="#4e3a22" stroke="#e8b468" stroke-width="1"/><rect x="313.0" y="153.6" width="3.4" height="18.9" fill="#4e3a22" stroke="#e8b468" stroke-width="1"/><rect x="323.8" y="155.9" width="3.4" height="18.9" fill="#4e3a22" stroke="#e8b468" stroke-width="1"/><rect x="334.5" y="158.2" width="3.4" height="18.9" fill="#4e3a22" stroke="#e8b468" stroke-width="1"/><rect x="345.3" y="160.6" width="3.4" height="18.9" fill="#4e3a22" stroke="#e8b468" stroke-width="1"/><rect x="356.1" y="162.9" width="3.4" height="18.9" fill="#4e3a22" stroke="#e8b468" stroke-width="1"/><polygon points="301.0,130.0 397.9,150.9 357.8,163.4 260.9,142.5" fill="#555" stroke="#fafafa" stroke-width="1.2"/><polygon points="285.0,160.9 310.1,153.1 310.1,171.5 285.0,179.3" fill="#6a6a6a" stroke="#e8e8e8" stroke-width=".8"/><polygon points="285.0,160.9 310.1,153.1 310.1,155.8 285.0,163.6" fill="#cfcfcf"/><polygon points="286.5,164.4 290.8,163.1 290.8,174.5 286.5,175.8" fill="#c4c4c4" stroke="#f4f4f4" stroke-width="1"/><polygon points="291.8,162.8 296.0,161.5 296.0,172.8 291.8,174.2" fill="#c4c4c4" stroke="#f4f4f4" stroke-width="1"/><polygon points="299.1,160.5 303.3,159.2 303.3,170.6 299.1,171.9" fill="#c4c4c4" stroke="#f4f4f4" stroke-width="1"/><polygon points="304.3,158.9 308.6,157.6 308.6,168.9 304.3,170.3" fill="#c4c4c4" stroke="#f4f4f4" stroke-width="1"/><rect x="283.6" y="160.4" width="2.72" height="18.9" fill="#4e3a22" stroke="#e8b468" stroke-width="1"/><rect x="296.2" y="156.5" width="2.72" height="18.9" fill="#4e3a22" stroke="#e8b468" stroke-width="1"/><rect x="308.7" y="152.6" width="2.72" height="18.9" fill="#4e3a22" stroke="#e8b468" stroke-width="1"/><polygon points="244.3,152.1 285.0,160.9 285.0,179.3 244.3,170.5" fill="#6a6a6a" stroke="#e8e8e8" stroke-width=".8"/><polygon points="244.3,152.1 285.0,160.9 285.0,163.6 244.3,154.8" fill="#cfcfcf"/><polygon points="245.9,156.5 250.5,157.5 250.5,168.8 245.9,167.8" fill="#c4c4c4" stroke="#f4f4f4" stroke-width="1"/><polygon points="251.6,157.7 256.2,158.7 256.2,170.1 251.6,169.1" fill="#c4c4c4" stroke="#f4f4f4" stroke-width="1"/><polygon points="259.5,159.4 264.1,160.4 264.1,171.8 259.5,170.8" fill="#c4c4c4" stroke="#f4f4f4" stroke-width="1"/><polygon points="265.2,160.6 269.8,161.6 269.8,173.0 265.2,172.0" fill="#c4c4c4" stroke="#f4f4f4" stroke-width="1"/><polygon points="273.1,162.3 277.7,163.3 277.7,174.7 273.1,173.7" fill="#c4c4c4" stroke="#f4f4f4" stroke-width="1"/><polygon points="278.8,163.6 283.4,164.6 283.4,175.9 278.8,174.9" fill="#c4c4c4" stroke="#f4f4f4" stroke-width="1"/><rect x="242.9" y="151.6" width="2.72" height="18.9" fill="#4e3a22" stroke="#e8b468" stroke-width="1"/><rect x="256.5" y="154.5" width="2.72" height="18.9" fill="#4e3a22" stroke="#e8b468" stroke-width="1"/><rect x="270.1" y="157.5" width="2.72" height="18.9" fill="#4e3a22" stroke="#e8b468" stroke-width="1"/><rect x="283.6" y="160.4" width="2.72" height="18.9" fill="#4e3a22" stroke="#e8b468" stroke-width="1"/><polygon points="269.3,144.3 310.1,153.1 285.0,160.9 244.3,152.1" fill="#555" stroke="#fafafa" stroke-width="0.96"/><polygon points="293.2,183.5 332.7,171.2 332.7,189.6 293.2,201.9" fill="#6a6a6a" stroke="#e8e8e8" stroke-width=".8"/><polygon points="293.2,183.5 332.7,171.2 332.7,173.9 293.2,186.2" fill="#cfcfcf"/><polygon points="294.4,187.1 297.7,186.1 297.7,197.4 294.4,198.5" fill="#c4c4c4" stroke="#f4f4f4" stroke-width="1"/><polygon points="298.5,185.8 301.9,184.8 301.9,196.1 298.5,197.2" fill="#c4c4c4" stroke="#f4f4f4" stroke-width="1"/><polygon points="304.2,184.0 307.6,183.0 307.6,194.4 304.2,195.4" fill="#c4c4c4" stroke="#f4f4f4" stroke-width="1"/><polygon points="308.4,182.8 311.8,181.7 311.8,193.1 308.4,194.1" fill="#c4c4c4" stroke="#f4f4f4" stroke-width="1"/><polygon points="314.1,181.0 317.5,179.9 317.5,191.3 314.1,192.3" fill="#c4c4c4" stroke="#f4f4f4" stroke-width="1"/><polygon points="318.3,179.7 321.6,178.6 321.6,190.0 318.3,191.0" fill="#c4c4c4" stroke="#f4f4f4" stroke-width="1"/><polygon points="324.0,177.9 327.4,176.9 327.4,188.2 324.0,189.3" fill="#c4c4c4" stroke="#f4f4f4" stroke-width="1"/><polygon points="328.1,176.6 331.5,175.6 331.5,186.9 328.1,188.0" fill="#c4c4c4" stroke="#f4f4f4" stroke-width="1"/><rect x="291.5" y="183.0" width="3.4" height="18.9" fill="#4e3a22" stroke="#e8b468" stroke-width="1"/><rect x="301.4" y="179.9" width="3.4" height="18.9" fill="#4e3a22" stroke="#e8b468" stroke-width="1"/><rect x="311.2" y="176.8" width="3.4" height="18.9" fill="#4e3a22" stroke="#e8b468" stroke-width="1"/><rect x="321.1" y="173.8" width="3.4" height="18.9" fill="#4e3a22" stroke="#e8b468" stroke-width="1"/><rect x="331.0" y="170.7" width="3.4" height="18.9" fill="#4e3a22" stroke="#e8b468" stroke-width="1"/><polygon points="196.3,162.6 293.2,183.5 293.2,201.9 196.3,180.9" fill="#6a6a6a" stroke="#e8e8e8" stroke-width=".8"/><polygon points="196.3,162.6 293.2,183.5 293.2,186.2 196.3,165.2" fill="#cfcfcf"/><polygon points="197.6,166.9 201.2,167.6 201.2,179.0 197.6,178.2" fill="#c4c4c4" stroke="#f4f4f4" stroke-width="1"/><polygon points="202.1,167.8 205.8,168.6 205.8,180.0 202.1,179.2" fill="#c4c4c4" stroke="#f4f4f4" stroke-width="1"/><polygon points="208.3,169.2 212.0,170.0 212.0,181.3 208.3,180.5" fill="#c4c4c4" stroke="#f4f4f4" stroke-width="1"/><polygon points="212.9,170.2 216.5,170.9 216.5,182.3 212.9,181.5" fill="#c4c4c4" stroke="#f4f4f4" stroke-width="1"/><polygon points="219.1,171.5 222.8,172.3 222.8,183.6 219.1,182.9" fill="#c4c4c4" stroke="#f4f4f4" stroke-width="1"/><polygon points="223.6,172.5 227.3,173.3 227.3,184.6 223.6,183.8" fill="#c4c4c4" stroke="#f4f4f4" stroke-width="1"/><polygon points="229.9,173.8 233.5,174.6 233.5,186.0 229.9,185.2" fill="#c4c4c4" stroke="#f4f4f4" stroke-width="1"/><polygon points="234.4,174.8 238.1,175.6 238.1,186.9 234.4,186.2" fill="#c4c4c4" stroke="#f4f4f4" stroke-width="1"/><polygon points="240.6,176.1 244.3,176.9 244.3,188.3 240.6,187.5" fill="#c4c4c4" stroke="#f4f4f4" stroke-width="1"/><polygon points="245.2,177.1 248.8,177.9 248.8,189.3 245.2,188.5" fill="#c4c4c4" stroke="#f4f4f4" stroke-width="1"/><polygon points="251.4,178.5 255.1,179.3 255.1,190.6 251.4,189.8" fill="#c4c4c4" stroke="#f4f4f4" stroke-width="1"/><polygon points="255.9,179.4 259.6,180.2 259.6,191.6 255.9,190.8" fill="#c4c4c4" stroke="#f4f4f4" stroke-width="1"/><polygon points="262.2,180.8 265.8,181.6 265.8,192.9 262.2,192.2" fill="#c4c4c4" stroke="#f4f4f4" stroke-width="1"/><polygon points="266.7,181.8 270.4,182.6 270.4,193.9 266.7,193.1" fill="#c4c4c4" stroke="#f4f4f4" stroke-width="1"/><polygon points="272.9,183.1 276.6,183.9 276.6,195.3 272.9,194.5" fill="#c4c4c4" stroke="#f4f4f4" stroke-width="1"/><polygon points="277.5,184.1 281.1,184.9 281.1,196.2 277.5,195.5" fill="#c4c4c4" stroke="#f4f4f4" stroke-width="1"/><polygon points="283.7,185.4 287.4,186.2 287.4,197.6 283.7,196.8" fill="#c4c4c4" stroke="#f4f4f4" stroke-width="1"/><polygon points="288.2,186.4 291.9,187.2 291.9,198.6 288.2,197.8" fill="#c4c4c4" stroke="#f4f4f4" stroke-width="1"/><rect x="194.6" y="162.1" width="3.4" height="18.9" fill="#4e3a22" stroke="#e8b468" stroke-width="1"/><rect x="205.4" y="164.4" width="3.4" height="18.9" fill="#4e3a22" stroke="#e8b468" stroke-width="1"/><rect x="216.1" y="166.7" width="3.4" height="18.9" fill="#4e3a22" stroke="#e8b468" stroke-width="1"/><rect x="226.9" y="169.0" width="3.4" height="18.9" fill="#4e3a22" stroke="#e8b468" stroke-width="1"/><rect x="237.7" y="171.4" width="3.4" height="18.9" fill="#4e3a22" stroke="#e8b468" stroke-width="1"/><rect x="248.4" y="173.7" width="3.4" height="18.9" fill="#4e3a22" stroke="#e8b468" stroke-width="1"/><rect x="259.2" y="176.0" width="3.4" height="18.9" fill="#4e3a22" stroke="#e8b468" stroke-width="1"/><rect x="270.0" y="178.3" width="3.4" height="18.9" fill="#4e3a22" stroke="#e8b468" stroke-width="1"/><rect x="280.7" y="180.7" width="3.4" height="18.9" fill="#4e3a22" stroke="#e8b468" stroke-width="1"/><rect x="291.5" y="183.0" width="3.4" height="18.9" fill="#4e3a22" stroke="#e8b468" stroke-width="1"/><polygon points="235.8,150.3 332.7,171.2 293.2,183.5 196.3,162.6" fill="#555" stroke="#fafafa" stroke-width="1.2"/><polygon points="381.3,148.0 395.1,151.0 377.5,156.4 363.7,153.4" fill="#4a4a4a" stroke="#fff" stroke-width="0.96"/><polygon points="381.1,149.3 390.3,151.3 377.7,155.2 368.5,153.2" fill="#9a9a9a" stroke="#ddd" stroke-width="0.48"/><polygon points="376.0,150.8 385.3,152.8 382.8,153.6 373.5,151.6" fill="#3a3a3a" stroke="#fff" stroke-width="0.48"/><polygon points="296.6,174.3 310.5,177.3 292.9,182.8 279.1,179.8" fill="#4a4a4a" stroke="#fff" stroke-width="0.96"/><polygon points="296.4,175.6 305.6,177.6 293.1,181.5 283.9,179.5" fill="#9a9a9a" stroke="#ddd" stroke-width="0.48"/><polygon points="291.4,177.1 300.6,179.1 298.1,179.9 288.9,177.9" fill="#3a3a3a" stroke="#fff" stroke-width="0.48"/><polygon points="269.3,144.3 310.1,153.1 285.0,160.9 244.3,152.1" fill="#555" stroke="#fff" stroke-width="0.84"/><polygon points="291.6,149.1 310.1,153.1 285.0,160.9 266.6,156.9" fill="#555" stroke="#fff" stroke-width="0.72"/><polygon points="294.7,149.8 310.1,153.1 305.1,154.7 289.7,151.3" fill="#4a4a4a" stroke="#fff" stroke-width="0.6"/><polygon points="263.4,149.0 277.3,152.0 267.2,155.1 253.4,152.1" fill="#fff" stroke="#fff" stroke-width="0.48"/><polygon points="263.7,149.7 269.1,150.9 261.6,153.2 256.2,152.0" fill="#4a4a4a" stroke="#4a4a4a" stroke-width="0.3"/><polygon points="270.6,151.2 274.5,152.0 267.0,154.4 263.1,153.5" fill="#4a4a4a" stroke="#4a4a4a" stroke-width="0.3"/><polygon points="270.1,144.5 280.9,146.8 277.1,148.0 266.3,145.6" fill="#aaa" stroke="#fff" stroke-width="0.6"/><rect x="303.1" y="141.9" width="1.2" height="1.2" fill="#e8e8e8"/><rect x="313.3" y="145.3" width="1.2" height="1.2" fill="#e8e8e8"/><rect x="357.5" y="144.2" width="1.2" height="1.2" fill="#e8e8e8"/><rect x="271.0" y="140.8" width="1.2" height="1.2" fill="#e8e8e8"/><rect x="316.8" y="138.7" width="1.2" height="1.2" fill="#e8e8e8"/><rect x="377.0" y="156.4" width="1.2" height="1.2" fill="#e8e8e8"/><rect x="361.8" y="153.2" width="1.2" height="1.2" fill="#e8e8e8"/><rect x="355.6" y="145.4" width="1.2" height="1.2" fill="#e8e8e8"/><rect x="328.2" y="153.7" width="1.2" height="1.2" fill="#e8e8e8"/><rect x="322.5" y="150.0" width="1.2" height="1.2" fill="#e8e8e8"/><rect x="361.9" y="145.1" width="1.2" height="1.2" fill="#e8e8e8"/><rect x="350.2" y="153.0" width="1.2" height="1.2" fill="#e8e8e8"/><rect x="328.4" y="137.2" width="1.2" height="1.2" fill="#e8e8e8"/><rect x="364.7" y="153.8" width="1.2" height="1.2" fill="#e8e8e8"/><rect x="335.7" y="155.6" width="1.2" height="1.2" fill="#e8e8e8"/><rect x="333.6" y="156.0" width="1.2" height="1.2" fill="#e8e8e8"/><rect x="308.2" y="148.1" width="1.2" height="1.2" fill="#e8e8e8"/><rect x="307.8" y="150.7" width="1.2" height="1.2" fill="#e8e8e8"/><rect x="380.1" y="149.7" width="1.2" height="1.2" fill="#e8e8e8"/><rect x="305.9" y="136.0" width="1.2" height="1.2" fill="#e8e8e8"/><rect x="375.5" y="155.4" width="1.2" height="1.2" fill="#e8e8e8"/><rect x="348.8" y="146.9" width="1.2" height="1.2" fill="#e8e8e8"/><rect x="334.4" y="145.5" width="1.2" height="1.2" fill="#e8e8e8"/><rect x="312.2" y="144.7" width="1.2" height="1.2" fill="#e8e8e8"/><rect x="322.1" y="153.1" width="1.2" height="1.2" fill="#e8e8e8"/><rect x="330.3" y="155.4" width="1.2" height="1.2" fill="#e8e8e8"/><rect x="344.3" y="159.7" width="1.2" height="1.2" fill="#e8e8e8"/><rect x="358.1" y="146.2" width="1.2" height="1.2" fill="#e8e8e8"/><rect x="345.7" y="159.4" width="1.2" height="1.2" fill="#e8e8e8"/><rect x="364.8" y="155.7" width="1.2" height="1.2" fill="#e8e8e8"/><rect x="360.3" y="147.6" width="1.2" height="1.2" fill="#e8e8e8"/><rect x="357.7" y="154.3" width="1.2" height="1.2" fill="#e8e8e8"/><rect x="325.6" y="137.2" width="1.2" height="1.2" fill="#e8e8e8"/><rect x="344.2" y="159.6" width="1.2" height="1.2" fill="#e8e8e8"/><rect x="279.5" y="141.9" width="1.2" height="1.2" fill="#e8e8e8"/><rect x="334.1" y="140.8" width="1.2" height="1.2" fill="#e8e8e8"/><rect x="299.9" y="145.7" width="1.2" height="1.2" fill="#e8e8e8"/><rect x="381.5" y="148.9" width="1.2" height="1.2" fill="#e8e8e8"/><rect x="357.2" y="143.7" width="1.2" height="1.2" fill="#e8e8e8"/><rect x="356.2" y="149.1" width="1.2" height="1.2" fill="#e8e8e8"/><rect x="347.0" y="160.0" width="1.2" height="1.2" fill="#e8e8e8"/><rect x="311.1" y="152.6" width="1.2" height="1.2" fill="#e8e8e8"/><rect x="327.4" y="137.9" width="1.2" height="1.2" fill="#e8e8e8"/><rect x="356.4" y="143.2" width="1.2" height="1.2" fill="#e8e8e8"/><rect x="304.5" y="139.5" width="1.2" height="1.2" fill="#e8e8e8"/><rect x="287.6" y="165.2" width="1.2" height="1.2" fill="#e8e8e8"/><rect x="208.0" y="161.8" width="1.2" height="1.2" fill="#e8e8e8"/><rect x="230.1" y="168.4" width="1.2" height="1.2" fill="#e8e8e8"/><rect x="306.2" y="173.5" width="1.2" height="1.2" fill="#e8e8e8"/><rect x="260.0" y="166.3" width="1.2" height="1.2" fill="#e8e8e8"/><rect x="274.4" y="170.9" width="1.2" height="1.2" fill="#e8e8e8"/><rect x="265.6" y="169.5" width="1.2" height="1.2" fill="#e8e8e8"/><rect x="305.6" y="175.9" width="1.2" height="1.2" fill="#e8e8e8"/><rect x="249.9" y="168.0" width="1.2" height="1.2" fill="#e8e8e8"/><rect x="247.2" y="159.3" width="1.2" height="1.2" fill="#e8e8e8"/><rect x="308.5" y="176.8" width="1.2" height="1.2" fill="#e8e8e8"/><rect x="287.1" y="162.2" width="1.2" height="1.2" fill="#e8e8e8"/><rect x="253.6" y="166.1" width="1.2" height="1.2" fill="#e8e8e8"/><rect x="215.2" y="158.5" width="1.2" height="1.2" fill="#e8e8e8"/><rect x="293.2" y="164.5" width="1.2" height="1.2" fill="#e8e8e8"/><rect x="277.7" y="169.1" width="1.2" height="1.2" fill="#e8e8e8"/><rect x="286.8" y="168.8" width="1.2" height="1.2" fill="#e8e8e8"/><rect x="275.1" y="173.8" width="1.2" height="1.2" fill="#e8e8e8"/><rect x="235.9" y="152.1" width="1.2" height="1.2" fill="#e8e8e8"/><rect x="263.9" y="175.8" width="1.2" height="1.2" fill="#e8e8e8"/><rect x="242.8" y="161.3" width="1.2" height="1.2" fill="#e8e8e8"/><rect x="279.8" y="166.7" width="1.2" height="1.2" fill="#e8e8e8"/><rect x="258.7" y="162.0" width="1.2" height="1.2" fill="#e8e8e8"/><rect x="248.7" y="165.3" width="1.2" height="1.2" fill="#e8e8e8"/><rect x="250.3" y="161.4" width="1.2" height="1.2" fill="#e8e8e8"/><rect x="307.5" y="167.0" width="1.2" height="1.2" fill="#e8e8e8"/><rect x="262.3" y="171.0" width="1.2" height="1.2" fill="#e8e8e8"/><rect x="256.9" y="159.8" width="1.2" height="1.2" fill="#e8e8e8"/><rect x="302.7" y="170.0" width="1.2" height="1.2" fill="#e8e8e8"/><rect x="237.6" y="159.8" width="1.2" height="1.2" fill="#e8e8e8"/><rect x="297.8" y="166.3" width="1.2" height="1.2" fill="#e8e8e8"/><rect x="253.9" y="161.4" width="1.2" height="1.2" fill="#e8e8e8"/><rect x="298.1" y="172.9" width="1.2" height="1.2" fill="#e8e8e8"/><rect x="310.1" y="170.3" width="1.2" height="1.2" fill="#e8e8e8"/><rect x="243.6" y="165.3" width="1.2" height="1.2" fill="#e8e8e8"/><rect x="302.4" y="174.1" width="1.2" height="1.2" fill="#e8e8e8"/><rect x="252.7" y="157.0" width="1.2" height="1.2" fill="#e8e8e8"/><rect x="278.7" y="163.9" width="1.2" height="1.2" fill="#e8e8e8"/><rect x="280.7" y="177.0" width="1.2" height="1.2" fill="#e8e8e8"/><rect x="243.0" y="157.9" width="1.2" height="1.2" fill="#e8e8e8"/><rect x="288.1" y="174.7" width="1.2" height="1.2" fill="#e8e8e8"/><rect x="298.9" y="171.3" width="1.2" height="1.2" fill="#e8e8e8"/><rect x="237.4" y="157.0" width="1.2" height="1.2" fill="#e8e8e8"/><rect x="300.5" y="170.2" width="1.2" height="1.2" fill="#e8e8e8"/><rect x="253.1" y="162.8" width="1.2" height="1.2" fill="#e8e8e8"/><line x1="289" y1="197" x2="302" y2="210" stroke="#aaa" stroke-width="4"/><line x1="377" y1="173" x2="389" y2="187" stroke="#aaa" stroke-width="4"/></svg></div></div><div class="a" style="left:4px;top:168px;width:3px;height:771px;background:#3c3f42"></div><div class="a" style="left:6px;top:171px;width:201px;height:768px;background:#fff"></div><div class="ph a" style="left:6px;top:171px;width:200px"></div><div class="t" style="left:9px;top:173px;color:#5a5a5a;font-size:12px">项目浏览器</div><svg class="a" style="left:176px;top:173px" width="10" height="12" viewBox="0 0 10 12" ><path d="M2 1 H8 M3 1 V7 H7 V1 M1 7 H9 M5 7 V11" stroke="#333" fill="none"/></svg><svg class="a" style="left:192px;top:174px" width="10" height="10" viewBox="0 0 10 10" ><path d="M1 1 L9 9 M9 1 L1 9" stroke="#333" stroke-width="1.3"/></svg><div class="a" style="left:207px;top:168px;width:4px;height:750px;background:#4a4a4a"></div><div class="ex" style="left:12px;top:194px"></div><svg class="a" style="left:28px;top:191px" width="14" height="16" viewBox="0 0 14 16" ><rect x="0.5" y="0.5" width="13" height="15" fill="#222"/><circle cx="7" cy="8" r="4.5" fill="none" stroke="#ddd" stroke-width="1.2" stroke-dasharray="2 1"/><circle cx="7" cy="8" r="2" fill="none" stroke="#ddd"/></svg><div class="tr" style="left:48px;top:190px">工程设置</div><svg class="a" style="left:46px;top:211px" width="15" height="16" viewBox="0 0 15 16" ><path d="M1 1 H9 L12 4 V15 H1 Z" fill="#f6f6f6" stroke="#9a9a9a"/><path d="M3 5 H8 M3 8 H8 M3 11 H7" stroke="#555" stroke-width="1"/><path d="M7 14 L13 7 L14.5 8.5 L9 15 Z" fill="#d01818"/></svg><div class="tr" style="left:67px;top:210px">给排水系统设置</div><svg class="a" style="left:46px;top:231px" width="15" height="16" viewBox="0 0 15 16" ><path d="M1 1 H9 L12 4 V15 H1 Z" fill="#f6f6f6" stroke="#9a9a9a"/><path d="M3 5 H8 M3 8 H8 M3 11 H7" stroke="#555" stroke-width="1"/><path d="M7 14 L13 7 L14.5 8.5 L9 15 Z" fill="#d01818"/></svg><div class="tr" style="left:67px;top:230px">管件默认设置</div><svg class="a" style="left:46px;top:251px" width="15" height="16" viewBox="0 0 15 16" ><path d="M1 1 H9 L12 4 V15 H1 Z" fill="#f6f6f6" stroke="#9a9a9a"/><path d="M3 5 H8 M3 8 H8 M3 11 H7" stroke="#555" stroke-width="1"/><path d="M7 14 L13 7 L14.5 8.5 L9 15 Z" fill="#d01818"/></svg><div class="tr" style="left:67px;top:250px">建模默认设置</div><svg class="a" style="left:46px;top:271px" width="15" height="16" viewBox="0 0 15 16" ><path d="M1 1 H9 L12 4 V15 H1 Z" fill="#f6f6f6" stroke="#9a9a9a"/><path d="M3 5 H8 M3 8 H8 M3 11 H7" stroke="#555" stroke-width="1"/><path d="M7 14 L13 7 L14.5 8.5 L9 15 Z" fill="#d01818"/></svg><div class="tr" style="left:67px;top:270px">水管材料设置</div><svg class="a" style="left:46px;top:291px" width="15" height="16" viewBox="0 0 15 16" ><path d="M1 1 H9 L12 4 V15 H1 Z" fill="#f6f6f6" stroke="#9a9a9a"/><path d="M3 5 H8 M3 8 H8 M3 11 H7" stroke="#555" stroke-width="1"/><path d="M7 14 L13 7 L14.5 8.5 L9 15 Z" fill="#d01818"/></svg><div class="tr" style="left:67px;top:290px">设备库管理</div><svg class="a" style="left:46px;top:311px" width="15" height="16" viewBox="0 0 15 16" ><path d="M1 1 H9 L12 4 V15 H1 Z" fill="#f6f6f6" stroke="#9a9a9a"/><path d="M3 5 H8 M3 8 H8 M3 11 H7" stroke="#555" stroke-width="1"/><path d="M7 14 L13 7 L14.5 8.5 L9 15 Z" fill="#d01818"/></svg><div class="tr" style="left:67px;top:310px">符号库管理</div><svg class="a" style="left:46px;top:331px" width="15" height="16" viewBox="0 0 15 16" ><path d="M1 1 H9 L12 4 V15 H1 Z" fill="#f6f6f6" stroke="#9a9a9a"/><path d="M3 5 H8 M3 8 H8 M3 11 H7" stroke="#555" stroke-width="1"/><path d="M7 14 L13 7 L14.5 8.5 L9 15 Z" fill="#d01818"/></svg><div class="tr" style="left:67px;top:330px">组合设备导入</div><svg class="a" style="left:46px;top:351px" width="15" height="16" viewBox="0 0 15 16" ><path d="M1 1 H9 L12 4 V15 H1 Z" fill="#f6f6f6" stroke="#9a9a9a"/><path d="M3 5 H8 M3 8 H8 M3 11 H7" stroke="#555" stroke-width="1"/><path d="M7 14 L13 7 L14.5 8.5 L9 15 Z" fill="#d01818"/></svg><div class="tr" style="left:67px;top:350px">机电通用设置</div><svg class="a" style="left:46px;top:371px" width="15" height="16" viewBox="0 0 15 16" ><path d="M1 1 H9 L12 4 V15 H1 Z" fill="#f6f6f6" stroke="#9a9a9a"/><path d="M3 5 H8 M3 8 H8 M3 11 H7" stroke="#555" stroke-width="1"/><path d="M7 14 L13 7 L14.5 8.5 L9 15 Z" fill="#d01818"/></svg><div class="tr" style="left:67px;top:370px">机电标注设置</div><div class="ex" style="left:12px;top:394px"></div><svg class="a" style="left:26px;top:391px" width="16" height="16" viewBox="0 0 16 16" ><rect x="6" y="1" width="8" height="14" fill="#5a8a9a"/><rect x="1" y="6" width="6" height="9" fill="#7aa8b8"/><path d="M7 4 H13 M7 7 H13 M7 10 H13 M2 9 H6 M2 12 H6" stroke="#e0f0f4" stroke-width="1"/><rect x="0" y="14" width="16" height="2" fill="#2a7a5a"/></svg><div class="tr" style="left:48px;top:390px">给排水模型</div><svg class="a" style="left:45px;top:411px" width="16" height="16" viewBox="0 0 16 16" ><rect x="6" y="1" width="8" height="14" fill="#5a8a9a"/><rect x="1" y="6" width="6" height="9" fill="#7aa8b8"/><path d="M7 4 H13 M7 7 H13 M7 10 H13 M2 9 H6 M2 12 H6" stroke="#e0f0f4" stroke-width="1"/><rect x="0" y="14" width="16" height="2" fill="#2a7a5a"/></svg><div class="tr" style="left:67px;top:410px">全楼模型</div><div class="ex" style="left:31px;top:434px"></div><svg class="a" style="left:46px;top:431px" width="15" height="16" viewBox="0 0 15 16" ><path d="M1 1 H9 L12 4 V15 H1 Z" fill="#f6f6f6" stroke="#9a9a9a"/><path d="M3 5 H8 M3 8 H8 M3 11 H7" stroke="#555" stroke-width="1"/><path d="M7 14 L13 7 L14.5 8.5 L9 15 Z" fill="#d01818"/></svg><div class="tr lt" style="left:67px;top:430px">ArchiCAD-StoreyList</div><svg class="a" style="left:65px;top:451px" width="15" height="16" viewBox="0 0 15 16" ><path d="M1 1 H9 L12 4 V15 H1 Z" fill="#f6f6f6" stroke="#9a9a9a"/><path d="M3 5 H8 M3 8 H8 M3 11 H7" stroke="#555" stroke-width="1"/><path d="M7 14 L13 7 L14.5 8.5 L9 15 Z" fill="#d01818"/></svg><div class="tr" style="left:86px;top:450px">楼层1</div><svg class="a" style="left:65px;top:471px" width="15" height="16" viewBox="0 0 15 16" ><path d="M1 1 H9 L12 4 V15 H1 Z" fill="#f6f6f6" stroke="#9a9a9a"/><path d="M3 5 H8 M3 8 H8 M3 11 H7" stroke="#555" stroke-width="1"/><path d="M7 14 L13 7 L14.5 8.5 L9 15 Z" fill="#d01818"/></svg><div class="tr" style="left:86px;top:470px">楼层2</div><svg class="a" style="left:65px;top:491px" width="15" height="16" viewBox="0 0 15 16" ><path d="M1 1 H9 L12 4 V15 H1 Z" fill="#f6f6f6" stroke="#9a9a9a"/><path d="M3 5 H8 M3 8 H8 M3 11 H7" stroke="#555" stroke-width="1"/><path d="M7 14 L13 7 L14.5 8.5 L9 15 Z" fill="#d01818"/></svg><div class="a" style="left:84px;top:489px;width:35px;height:19px;background:#5ec45e"></div><div class="tr" style="left:86px;top:490px">楼层3</div><svg class="a" style="left:65px;top:511px" width="15" height="16" viewBox="0 0 15 16" ><path d="M1 1 H9 L12 4 V15 H1 Z" fill="#f6f6f6" stroke="#9a9a9a"/><path d="M3 5 H8 M3 8 H8 M3 11 H7" stroke="#555" stroke-width="1"/><path d="M7 14 L13 7 L14.5 8.5 L9 15 Z" fill="#d01818"/></svg><div class="tr" style="left:86px;top:510px">楼层4</div><svg class="a" style="left:65px;top:531px" width="15" height="16" viewBox="0 0 15 16" ><path d="M1 1 H9 L12 4 V15 H1 Z" fill="#f6f6f6" stroke="#9a9a9a"/><path d="M3 5 H8 M3 8 H8 M3 11 H7" stroke="#555" stroke-width="1"/><path d="M7 14 L13 7 L14.5 8.5 L9 15 Z" fill="#d01818"/></svg><div class="tr" style="left:86px;top:530px">楼层5</div><svg class="a" style="left:65px;top:551px" width="15" height="16" viewBox="0 0 15 16" ><path d="M1 1 H9 L12 4 V15 H1 Z" fill="#f6f6f6" stroke="#9a9a9a"/><path d="M3 5 H8 M3 8 H8 M3 11 H7" stroke="#555" stroke-width="1"/><path d="M7 14 L13 7 L14.5 8.5 L9 15 Z" fill="#d01818"/></svg><div class="tr" style="left:86px;top:550px">楼层6</div><div class="ex" style="left:12px;top:574px"></div><svg class="a" style="left:28px;top:571px" width="15" height="15" viewBox="0 0 15 15" ><path d="M1 7 L7.5 1 L14 7 V14 H1 Z" fill="#fff" stroke="#223" stroke-width="1.2"/><path d="M4 14 V9 H11 V14 M5 11 H10" stroke="#2a5aa0" stroke-width="1.2" fill="none"/></svg><div class="tr" style="left:48px;top:570px">出图</div><svg class="a" style="left:47px;top:593px" width="15" height="13" viewBox="0 0 15 13" ><rect x="0.5" y="0.5" width="14" height="12" fill="#fafafa" stroke="#555"/><rect x="0.5" y="0.5" width="14" height="3" fill="#777"/><path d="M0.5 6.5 H14.5 M0.5 9.5 H14.5 M5 3.5 V12.5" stroke="#666" stroke-width=".8"/></svg><div class="tr" style="left:67px;top:590px">平面图</div><div class="ex" style="left:31px;top:614px"></div><svg class="a" style="left:47px;top:613px" width="15" height="13" viewBox="0 0 15 13" ><rect x="0.5" y="0.5" width="14" height="12" fill="#fafafa" stroke="#555"/><rect x="0.5" y="0.5" width="14" height="3" fill="#777"/><path d="M0.5 6.5 H14.5 M0.5 9.5 H14.5 M5 3.5 V12.5" stroke="#666" stroke-width=".8"/></svg><div class="tr" style="left:67px;top:610px">剖面图</div><svg class="a" style="left:66px;top:633px" width="15" height="13" viewBox="0 0 15 13" ><rect x="0.5" y="0.5" width="14" height="12" fill="#fafafa" stroke="#555"/><rect x="0.5" y="0.5" width="14" height="3" fill="#777"/><path d="M0.5 6.5 H14.5 M0.5 9.5 H14.5 M5 3.5 V12.5" stroke="#666" stroke-width=".8"/></svg><div class="tr" style="left:86px;top:630px">模型剖面图</div><svg class="a" style="left:66px;top:653px" width="15" height="13" viewBox="0 0 15 13" ><rect x="0.5" y="0.5" width="14" height="12" fill="#fafafa" stroke="#555"/><rect x="0.5" y="0.5" width="14" height="3" fill="#777"/><path d="M0.5 6.5 H14.5 M0.5 9.5 H14.5 M5 3.5 V12.5" stroke="#666" stroke-width=".8"/></svg><div class="tr" style="left:86px;top:650px">平面剖面图</div><svg class="a" style="left:47px;top:673px" width="15" height="13" viewBox="0 0 15 13" ><rect x="0.5" y="0.5" width="14" height="12" fill="#fafafa" stroke="#555"/><rect x="0.5" y="0.5" width="14" height="3" fill="#777"/><path d="M0.5 6.5 H14.5 M0.5 9.5 H14.5 M5 3.5 V12.5" stroke="#666" stroke-width=".8"/></svg><div class="tr" style="left:67px;top:670px">表格</div><svg class="a" style="left:47px;top:693px" width="15" height="13" viewBox="0 0 15 13" ><rect x="0.5" y="0.5" width="14" height="12" fill="#fafafa" stroke="#555"/><rect x="0.5" y="0.5" width="14" height="3" fill="#777"/><path d="M0.5 6.5 H14.5 M0.5 9.5 H14.5 M5 3.5 V12.5" stroke="#666" stroke-width=".8"/></svg><div class="tr" style="left:67px;top:690px">详图</div><svg class="a" style="left:47px;top:713px" width="15" height="13" viewBox="0 0 15 13" ><rect x="0.5" y="0.5" width="14" height="12" fill="#fafafa" stroke="#555"/><rect x="0.5" y="0.5" width="14" height="3" fill="#777"/><path d="M0.5 6.5 H14.5 M0.5 9.5 H14.5 M5 3.5 V12.5" stroke="#666" stroke-width=".8"/></svg><div class="tr" style="left:67px;top:710px">系统图</div><svg class="a" style="left:47px;top:733px" width="15" height="13" viewBox="0 0 15 13" ><rect x="0.5" y="0.5" width="14" height="12" fill="#fafafa" stroke="#555"/><rect x="0.5" y="0.5" width="14" height="3" fill="#777"/><path d="M0.5 6.5 H14.5 M0.5 9.5 H14.5 M5 3.5 V12.5" stroke="#666" stroke-width=".8"/></svg><div class="tr" style="left:67px;top:730px">原理图</div><svg class="a" style="left:26px;top:751px" width="16" height="16" viewBox="0 0 16 16" ><rect x="1" y="1" width="7" height="6" fill="#fff" stroke="#222"/><rect x="8" y="4" width="7" height="11" fill="#fff" stroke="#222"/><rect x="1" y="8" width="6" height="7" fill="#fff" stroke="#222"/><path d="M3 3 H6 M10 7 H13 M10 10 H13" stroke="#2a7a9a"/></svg><div class="tr" style="left:48px;top:750px">布图</div><div class="a" style="left:1441px;top:171px;width:4px;height:747px;background:linear-gradient(90deg,#f4f4f4 0,#f4f4f4 2px,#404040 2px)"></div><div class="a" style="left:1445px;top:171px;width:192px;height:744px;background:#f0f0f0"></div><div class="ph a" style="left:1445px;top:171px;width:192px"></div><div class="t" style="left:1449px;top:173px;color:#5a5a5a">属性</div><svg class="a" style="left:1605px;top:173px" width="10" height="12" viewBox="0 0 10 12" ><path d="M2 1 H8 M3 1 V7 H7 V1 M1 7 H9 M5 7 V11" stroke="#333" fill="none"/></svg><svg class="a" style="left:1622px;top:174px" width="10" height="10" viewBox="0 0 10 10" ><path d="M1 1 L9 9 M9 1 L1 9" stroke="#333" stroke-width="1.3"/></svg><div class="a" style="left:1449px;top:194px;width:124px;height:21px;border:1px solid #6a6a6a;border-radius:3px;background:linear-gradient(180deg,#f4f4f4 0,#e8e8e8 50%,#d8d8d8 51%,#e2e2e2 100%)"></div><div class="a" style="left:1560px;top:203px;width:0;height:0;border-left:4px solid transparent;border-right:4px solid transparent;border-top:4px solid #000"></div><div class="a" style="left:1580px;top:195px;width:52px;height:20px;border:1px solid #b8b8b8;background:#f0f0f0;color:#9a9a9a;text-align:center;line-height:18px">示意图</div><div class="a" style="left:1449px;top:220px;width:124px;height:21px;border:1px solid #dcdcdc;background:#fff"></div><div class="a" style="left:1560px;top:229px;width:0;height:0;border-left:4px solid transparent;border-right:4px solid transparent;border-top:4px solid #000"></div><div class="btn" style="left:1580px;top:221px;width:52px;height:20px">保存</div><div class="btn" style="left:1580px;top:885px;width:52px;height:21px;line-height:19px">修改</div><div class="a" style="left:1637px;top:168px;width:32px;height:801px;background:#b4b4b4"></div><div class="a" style="left:1638px;top:171px;width:30px;height:47px;background:#f4f4f4;border:1px solid #8a8a8a;border-top:7px solid #6a6a6a;border-radius:3px 3px 0 0"></div><div class="a" style="left:1645px;top:172px;width:16px;height:2px;border-left:2px dotted #fff;background:repeating-linear-gradient(90deg,#fff 0 2px,transparent 2px 4px)"></div><svg class="a" style="left:1644px;top:184px" width="17" height="16" viewBox="0 0 17 16" ><path d="M8.5 1 L10.5 4 L14 3.5 L13.5 7 L16 8.5 L13.5 10 L14 13.5 L10.5 13 L8.5 16 L6.5 13 L3 13.5 L3.5 10 L1 8.5 L3.5 7 L3 3.5 L6.5 4 Z" fill="#b8d4f0" stroke="#4a88d0" stroke-width="1.4"/><circle cx="8.5" cy="8.5" r="2.2" fill="#f4f4f4" stroke="#4a88d0"/></svg><div class="a" style="left:1644px;top:211px;width:17px;height:1px;background:#555"></div><div class="a" style="left:1669px;top:57px;width:8px;height:934px;background:linear-gradient(90deg,#2a2d30 0,#2a2d30 1px,#0c0e10 1px,#0c0e10 5px,#1a1d20 8px)"></div><div class="a" style="left:1670px;top:57px;width:4px;height:213px;background:linear-gradient(180deg,#8a8e92,#b4b8bc 60%,#9a9ea2)"></div><div class="a" style="left:1669px;top:578px;width:7px;height:56px;border:1px solid #777;border-radius:3px;background:repeating-linear-gradient(180deg,#c07a30 0 1px,#e8a050 1px 2px)"></div><div class="a" style="left:0;top:57px;width:5px;height:934px;background:linear-gradient(90deg,#1a1e22 0,#1a1e22 3px,#9a9a9a 3px,#9a9a9a 4px,#444 4px)"></div><div class="a" style="left:207px;top:912px;width:1238px;height:2px;background:#fff"></div><div class="a" style="left:207px;top:914px;width:1430px;height:3px;background:linear-gradient(180deg,#5a5a5a,#8a8a8a)"></div><div class="a" style="left:207px;top:917px;width:1430px;height:21px;background:#cdcdcd;border-bottom:1px solid #7a7a7a;border-right:1px solid #7a7a7a"></div><div class="a" style="left:208px;top:917px;width:17px;height:21px;background:#a8a8a8"></div><div class="a" style="left:213px;top:924px;width:6px;height:5px;background:repeating-linear-gradient(90deg,#555 0 1px,transparent 1px 2px);-webkit-mask:repeating-linear-gradient(180deg,#000 0 1px,transparent 1px 3px)"></div><div class="t" style="left:226px;top:921px">命令:</div><div class="a" style="left:263px;top:919px;width:1px;height:18px;background:#555"></div><div class="a" style="left:4px;top:938px;width:1665px;height:32px;background:#b4b4b4"></div><div class="a" style="left:4px;top:939px;width:10px;height:30px;background:#8a8a8a"></div><div class="a" style="left:9px;top:944px;width:3px;height:20px;background:repeating-linear-gradient(180deg,#fff 0 2px,transparent 2px 4px)"></div><div class="a" style="left:14px;top:939px;width:501px;height:30px;background:#efefef"></div><div class="a" style="left:519px;top:939px;width:7px;height:30px;background:#8a8a8a"></div><div class="a" style="left:521px;top:945px;width:3px;height:18px;background:repeating-linear-gradient(180deg,#fff 0 2px,#555 2px 4px)"></div><div class="a" style="left:526px;top:939px;width:215px;height:30px;background:#efefef;border-radius:0 3px 3px 0"></div><div class="t" style="left:531px;top:946px">设置基准角度</div><div class="a" style="left:611px;top:943px;width:95px;height:20px;background:#fff"></div><div class="t" style="left:712px;top:946px">拾取</div><svg class="a" style="left:21px;top:946px" width="17" height="17" viewBox="0 0 17 17" ><g transform="translate(.5 .5)"><path d="M4 1 V12 H15 M4 12 L1 15" fill="none" stroke="#aaa" stroke-width=".8"/><path d="M1 4 L4 1 H15 L12 4 Z" fill="#8a96a2"/><path d="M1 4 L4 1 H15 V12 L12 15 H1 Z" fill="none" stroke="#333" stroke-width="1"/><path d="M1 4 H12 V15 M12 4 L15 1" fill="none" stroke="#333" stroke-width=".9"/></g></svg><svg class="a" style="left:49px;top:946px" width="17" height="17" viewBox="0 0 17 17" ><g transform="translate(.5 .5)"><path d="M4 1 V12 H15 M4 12 L1 15" fill="none" stroke="#aaa" stroke-width=".8"/><path d="M1 15 L4 12 H15 L12 15 Z" fill="#8a96a2"/><path d="M1 4 L4 1 H15 V12 L12 15 H1 Z" fill="none" stroke="#333" stroke-width="1"/><path d="M1 4 H12 V15 M12 4 L15 1" fill="none" stroke="#333" stroke-width=".9"/></g></svg><svg class="a" style="left:77px;top:946px" width="17" height="17" viewBox="0 0 17 17" ><g transform="translate(.5 .5)"><path d="M4 1 V12 H15 M4 12 L1 15" fill="none" stroke="#aaa" stroke-width=".8"/><path d="M1 4 L4 1 V12 L1 15 Z" fill="#8a96a2"/><path d="M1 4 L4 1 H15 V12 L12 15 H1 Z" fill="none" stroke="#333" stroke-width="1"/><path d="M1 4 H12 V15 M12 4 L15 1" fill="none" stroke="#333" stroke-width=".9"/></g></svg><svg class="a" style="left:105px;top:946px" width="17" height="17" viewBox="0 0 17 17" ><g transform="translate(.5 .5)"><path d="M4 1 V12 H15 M4 12 L1 15" fill="none" stroke="#aaa" stroke-width=".8"/><rect x="1" y="4" width="11" height="11" fill="#8a96a2"/><path d="M1 4 L4 1 H15 V12 L12 15 H1 Z" fill="none" stroke="#333" stroke-width="1"/><path d="M1 4 H12 V15 M12 4 L15 1" fill="none" stroke="#333" stroke-width=".9"/></g></svg><svg class="a" style="left:133px;top:946px" width="17" height="17" viewBox="0 0 17 17" ><g transform="translate(.5 .5)"><path d="M4 1 V12 H15 M4 12 L1 15" fill="none" stroke="#aaa" stroke-width=".8"/><path d="M12 4 L15 1 V12 L12 15 Z" fill="#8a96a2"/><path d="M1 4 L4 1 H15 V12 L12 15 H1 Z" fill="none" stroke="#333" stroke-width="1"/><path d="M1 4 H12 V15 M12 4 L15 1" fill="none" stroke="#333" stroke-width=".9"/></g></svg><svg class="a" style="left:161px;top:946px" width="17" height="17" viewBox="0 0 17 17" ><g transform="translate(.5 .5)"><path d="M4 1 V12 H15 M4 12 L1 15" fill="none" stroke="#aaa" stroke-width=".8"/><rect x="3" y="2" width="12" height="11" fill="#7a8692" stroke="#444" stroke-width=".9"/><path d="M1 15 H13" stroke="#222" stroke-width="2"/><path d="M1 4 L4 1 H15 V12 L12 15 H1 Z" fill="none" stroke="#333" stroke-width="1"/><path d="M1 4 H12 V15 M12 4 L15 1" fill="none" stroke="#333" stroke-width=".9"/></g></svg><svg class="a" style="left:189px;top:945px" width="14" height="17" viewBox="0 0 14 17" ><path d="M7 1 L13 6 V12 L7 16 L1 12 V6 Z" fill="#fff" stroke="#444"/><path d="M1 6 L7 10 L13 6 M7 10 V16" fill="none" stroke="#888" stroke-width=".7"/><path d="M7 10 L13 6 V12 L7 16 Z" fill="#7a8692"/></svg><svg class="a" style="left:217px;top:945px" width="14" height="17" viewBox="0 0 14 17" ><path d="M7 1 L13 6 V12 L7 16 L1 12 V6 Z" fill="#fff" stroke="#444"/><path d="M1 6 L7 10 L13 6 M7 10 V16" fill="none" stroke="#888" stroke-width=".7"/><path d="M7 10 L1 6 V12 L7 16 Z" fill="#9aa6b2"/></svg><div class="a" style="left:242px;top:945px;width:1px;height:17px;background:#444"></div><svg class="a" style="left:250px;top:946px" width="17" height="16" viewBox="0 0 17 16" ><ellipse cx="8" cy="9" rx="7" ry="5" fill="#ddd" stroke="#444"/><circle cx="12" cy="4" r="3" fill="#fff" stroke="#444"/><path d="M3 13 L9 8" stroke="#222" stroke-width="1.5"/></svg><svg class="a" style="left:280px;top:945px" width="16" height="17" viewBox="0 0 16 17" ><path d="M4 16 L1 9 L3 8 L5 11 V3 L7 3 V9 V1 H9 V9 V2 H11 V9 V4 H13 V12 L11 16 Z" fill="#fff" stroke="#333" stroke-width=".9"/></svg><svg class="a" style="left:308px;top:945px" width="18" height="17" viewBox="0 0 18 17" ><path d="M1 5 V1 H5 M13 1 H17 V5 M17 12 V16 H13 M5 16 H1 V12" fill="none" stroke="#333" stroke-width="1.5"/><path d="M5 6 L7 4 H13 V11 L11 13 H5 Z" fill="none" stroke="#333"/><path d="M5 6 H11 V13 M11 6 L13 4" fill="none" stroke="#333"/></svg><svg class="a" style="left:336px;top:945px" width="17" height="17" viewBox="0 0 17 17" ><rect x="1" y="10" width="6" height="6" fill="#fff" stroke="#333"/><path d="M5 1 H16 V12" fill="none" stroke="#333" stroke-dasharray="2 1.5"/><path d="M8 9 L15 2 M11 2 H15 V6" stroke="#333" stroke-width="1.2" fill="none"/></svg><div class="a" style="left:363px;top:945px;width:1px;height:17px;background:#444"></div><svg class="a" style="left:372px;top:947px" width="17" height="13" viewBox="0 0 17 13" ><path d="M1 5 L5 1 H16 V8 L12 12 H1 Z" fill="#fff" stroke="#333"/><path d="M1 5 H12 V12 M12 5 L16 1 M1 8.5 H12" fill="none" stroke="#333"/></svg><svg class="a" style="left:400px;top:947px" width="17" height="13" viewBox="0 0 17 13" ><path d="M1 5 L5 1 H16 V8 L12 12 H1 Z" fill="#fff" stroke="#333"/><path d="M1 5 H12 V12 M12 5 L16 1" fill="none" stroke="#333"/></svg><div class="a" style="left:424px;top:941px;width:26px;height:26px;border:1px solid #f0b860;background:linear-gradient(180deg,#fde8b8,#f8c870 60%,#fcd890);border-radius:2px"></div><svg class="a" style="left:428px;top:947px" width="17" height="13" viewBox="0 0 17 13" ><path d="M1 5 L5 1 H16 V8 L12 12 H1 Z" fill="#8cc8f0" stroke="#333"/><path d="M1 5 H12 V12 M12 5 L16 1" fill="none" stroke="#333"/><path d="M1 5 L5 1 H16 L12 5 Z" fill="#c8e8fa" stroke="#333" stroke-width=".6"/></svg><div class="a" style="left:455px;top:945px;width:1px;height:17px;background:#444"></div><svg class="a" style="left:465px;top:947px" width="17" height="13" viewBox="0 0 17 13" ><path d="M1 5 L5 1 H16 V8 L12 12 H1 Z" fill="#fff" stroke="#333"/><path d="M1 5 H12 V12 M12 5 L16 1" fill="none" stroke="#333"/></svg><svg class="a" style="left:493px;top:945px" width="17" height="16" viewBox="0 0 17 16" ><path d="M1 6 L5 2 H12 V12 L8 15 H1 Z" fill="#cfe4f4" stroke="#5a7a98"/><rect x="7" y="1" width="9" height="9" fill="#fff" stroke="#333"/><path d="M11 1 V10 M7 5 H16" stroke="#333" stroke-width=".7"/></svg><div class="a" style="left:4px;top:969px;width:1665px;height:1px;background:#111"></div><div class="a" style="left:4px;top:970px;width:1665px;height:21px;background:linear-gradient(180deg,#808080,#a6a6a6)"></div><div class="t" style="left:82px;top:976px;font-size:11px;color:#111">25224.05</div><div class="t" style="left:140px;top:976px;font-size:11px;color:#111">-22674.13</div><div class="t" style="left:199px;top:976px;font-size:11px;color:#111">9000.00</div><div class="a" style="left:314px;top:970px;width:402px;height:21px;background:#8c8c8c;border-left:1px solid #5a5a5a"></div><div class="a" style="left:314px;top:970px;width:28px;height:21px;background:linear-gradient(180deg,#a4a4a4,#9a9a9a);border-right:1px solid #6a6a6a"></div><div class="a" style="left:342px;top:970px;width:28px;height:21px;background:linear-gradient(180deg,#bfe0ee,#8cc6dc);border-right:1px solid #6a6a6a"></div><div class="a" style="left:370px;top:970px;width:28px;height:21px;background:linear-gradient(180deg,#bfe0ee,#8cc6dc);border-right:1px solid #6a6a6a"></div><div class="a" style="left:398px;top:970px;width:28px;height:21px;background:linear-gradient(180deg,#bfe0ee,#8cc6dc);border-right:1px solid #6a6a6a"></div><div class="a" style="left:426px;top:970px;width:28px;height:21px;background:linear-gradient(180deg,#bfe0ee,#8cc6dc);border-right:1px solid #6a6a6a"></div><div class="a" style="left:454px;top:970px;width:28px;height:21px;background:linear-gradient(180deg,#bfe0ee,#8cc6dc);border-right:1px solid #6a6a6a"></div><div class="a" style="left:482px;top:970px;width:28px;height:21px;background:linear-gradient(180deg,#a4a4a4,#9a9a9a);border-right:1px solid #6a6a6a"></div><div class="a" style="left:510px;top:970px;width:28px;height:21px;background:linear-gradient(180deg,#a4a4a4,#9a9a9a);border-right:1px solid #6a6a6a"></div><div class="a" style="left:538px;top:970px;width:28px;height:21px;background:linear-gradient(180deg,#a4a4a4,#9a9a9a);border-right:1px solid #6a6a6a"></div><div class="a" style="left:566px;top:970px;width:28px;height:21px;background:linear-gradient(180deg,#a4a4a4,#9a9a9a);border-right:1px solid #6a6a6a"></div><div class="a" style="left:594px;top:970px;width:10px;height:21px;background:#6a6a6a"></div><div class="a" style="left:604px;top:970px;width:28px;height:21px;background:linear-gradient(180deg,#b4b4b4,#a2a2a2);border-right:1px solid #6a6a6a"></div><div class="a" style="left:632px;top:970px;width:28px;height:21px;background:linear-gradient(180deg,#b4b4b4,#a2a2a2);border-right:1px solid #6a6a6a"></div><div class="a" style="left:660px;top:970px;width:28px;height:21px;background:linear-gradient(180deg,#b4b4b4,#a2a2a2);border-right:1px solid #6a6a6a"></div><div class="a" style="left:688px;top:970px;width:28px;height:21px;background:linear-gradient(180deg,#b4b4b4,#a2a2a2);border-right:1px solid #6a6a6a"></div><svg class="a" style="left:320px;top:974px" width="16" height="16" viewBox="0 0 16 16" ><path d="M3 3 L13 13 M13 3 L3 13" stroke="#223" stroke-width="1.6"/><circle cx="8" cy="8" r="4" fill="#fff" stroke="#223" stroke-width="1.4"/><circle cx="8" cy="8" r="1.5" fill="#2a6ab0"/></svg><svg class="a" style="left:348px;top:974px" width="16" height="16" viewBox="0 0 16 16" ><path d="M2 12 Q5 15 8 11 Q10 7 13 4" fill="none" stroke="#2a5a9a" stroke-width="1.5"/><circle cx="3" cy="12" r="1.8" fill="#fff" stroke="#2a5a9a"/><circle cx="8" cy="11" r="1.8" fill="#fff" stroke="#2a5a9a"/><circle cx="13" cy="4" r="1.8" fill="#fff" stroke="#2a5a9a"/></svg><svg class="a" style="left:376px;top:974px" width="16" height="16" viewBox="0 0 16 16" ><circle cx="8" cy="8" r="6" fill="none" stroke="#223" stroke-width="1.4"/><circle cx="8" cy="8" r="2" fill="#fff" stroke="#2a6ab0" stroke-width="1.4"/></svg><svg class="a" style="left:404px;top:974px" width="16" height="16" viewBox="0 0 16 16" ><path d="M1 12 L15 5" stroke="#2a5a9a" stroke-width="1.4"/><circle cx="8" cy="8.5" r="1.8" fill="#fff" stroke="#2a5a9a"/></svg><svg class="a" style="left:432px;top:974px" width="16" height="16" viewBox="0 0 16 16" ><path d="M1 12 Q5 14 8 9 Q11 4 15 4" fill="none" stroke="#223" stroke-width="1.4"/><circle cx="8" cy="9" r="1.8" fill="#fff" stroke="#2a5a9a"/></svg><svg class="a" style="left:460px;top:974px" width="16" height="16" viewBox="0 0 16 16" ><path d="M2 2 L14 14 M14 2 L2 14" stroke="#223" stroke-width="1.4"/><circle cx="8" cy="8" r="2" fill="#fff" stroke="#2a5a9a"/></svg><svg class="a" style="left:488px;top:974px" width="16" height="16" viewBox="0 0 16 16" ><path d="M8 1 V8 L2 14 M8 8 L14 14" stroke="#223" stroke-width="1.4" fill="none"/><circle cx="8" cy="8" r="2" fill="#fff" stroke="#2a5a9a"/></svg><svg class="a" style="left:516px;top:974px" width="16" height="16" viewBox="0 0 16 16" ><path d="M1 8 Q8 1 15 8" stroke="#223" stroke-width="1.4" fill="none"/><circle cx="8" cy="5" r="2" fill="#fff" stroke="#2a5a9a"/></svg><svg class="a" style="left:544px;top:974px" width="16" height="16" viewBox="0 0 16 16" ><circle cx="4" cy="5" r="2.5" fill="#fff" stroke="#2a5a9a"/><path d="M7 5 H15 M2 11 H15" stroke="#223" stroke-width="1.6"/></svg><svg class="a" style="left:572px;top:974px" width="16" height="16" viewBox="0 0 16 16" ><circle cx="8" cy="8" r="6.5" fill="none" stroke="#c01818" stroke-width="2"/><path d="M3.5 12.5 L12.5 3.5" stroke="#c01818" stroke-width="2"/></svg><svg class="a" style="left:610px;top:975px" width="16" height="16" viewBox="0 0 16 16" ><path d="M1 3 H15 M1 6 H15 M1 9 H15 M1 12 H15 M3 1 V15 M6 1 V15 M9 1 V15 M12 1 V15" stroke="#111" stroke-width="1"/></svg><svg class="a" style="left:638px;top:975px" width="16" height="16" viewBox="0 0 16 16" ><path d="M8 2 V14 M2 8 H14" stroke="#2a9a3a" stroke-width="1"/><path d="M8 8 H14" stroke="#c82828"/><rect x="4" y="4" width="8" height="8" fill="none" stroke="#444" stroke-dasharray="1.5 1"/><circle cx="8" cy="8" r="1.3" fill="#2a5aa0"/></svg><svg class="a" style="left:667px;top:975px" width="16" height="17" viewBox="0 0 16 17" ><path d="M2 1 V15 H15" stroke="#111" stroke-width="1.4" fill="none"/><path d="M2 10 H7 V15" stroke="#2a5aa0" stroke-width="1.4" fill="none"/></svg><svg class="a" style="left:694px;top:974px" width="17" height="16" viewBox="0 0 17 16" ><path d="M8.5 2 L15 6 L8.5 10 L2 6 Z" fill="#ddd" stroke="#667"/><path d="M2 6 V10 L8.5 14 L15 10 V6" fill="none" stroke="#667"/><circle cx="8.5" cy="8" r="2" fill="#7aa8d8"/></svg><div class="a" style="left:1612px;top:970px;width:1px;height:21px;background:#5a5a5a"></div><div class="t" style="left:1001px;top:975px;color:#111">当前状态：</div><div class="t" style="left:1069px;top:975px;color:#111;letter-spacing:-0.22px">ArchiCAD-StoreyList-给排水-模型-楼层3-副本1视图</div><div class="t" style="left:1620px;top:975px;color:#111">消息：0</div></body></html>
